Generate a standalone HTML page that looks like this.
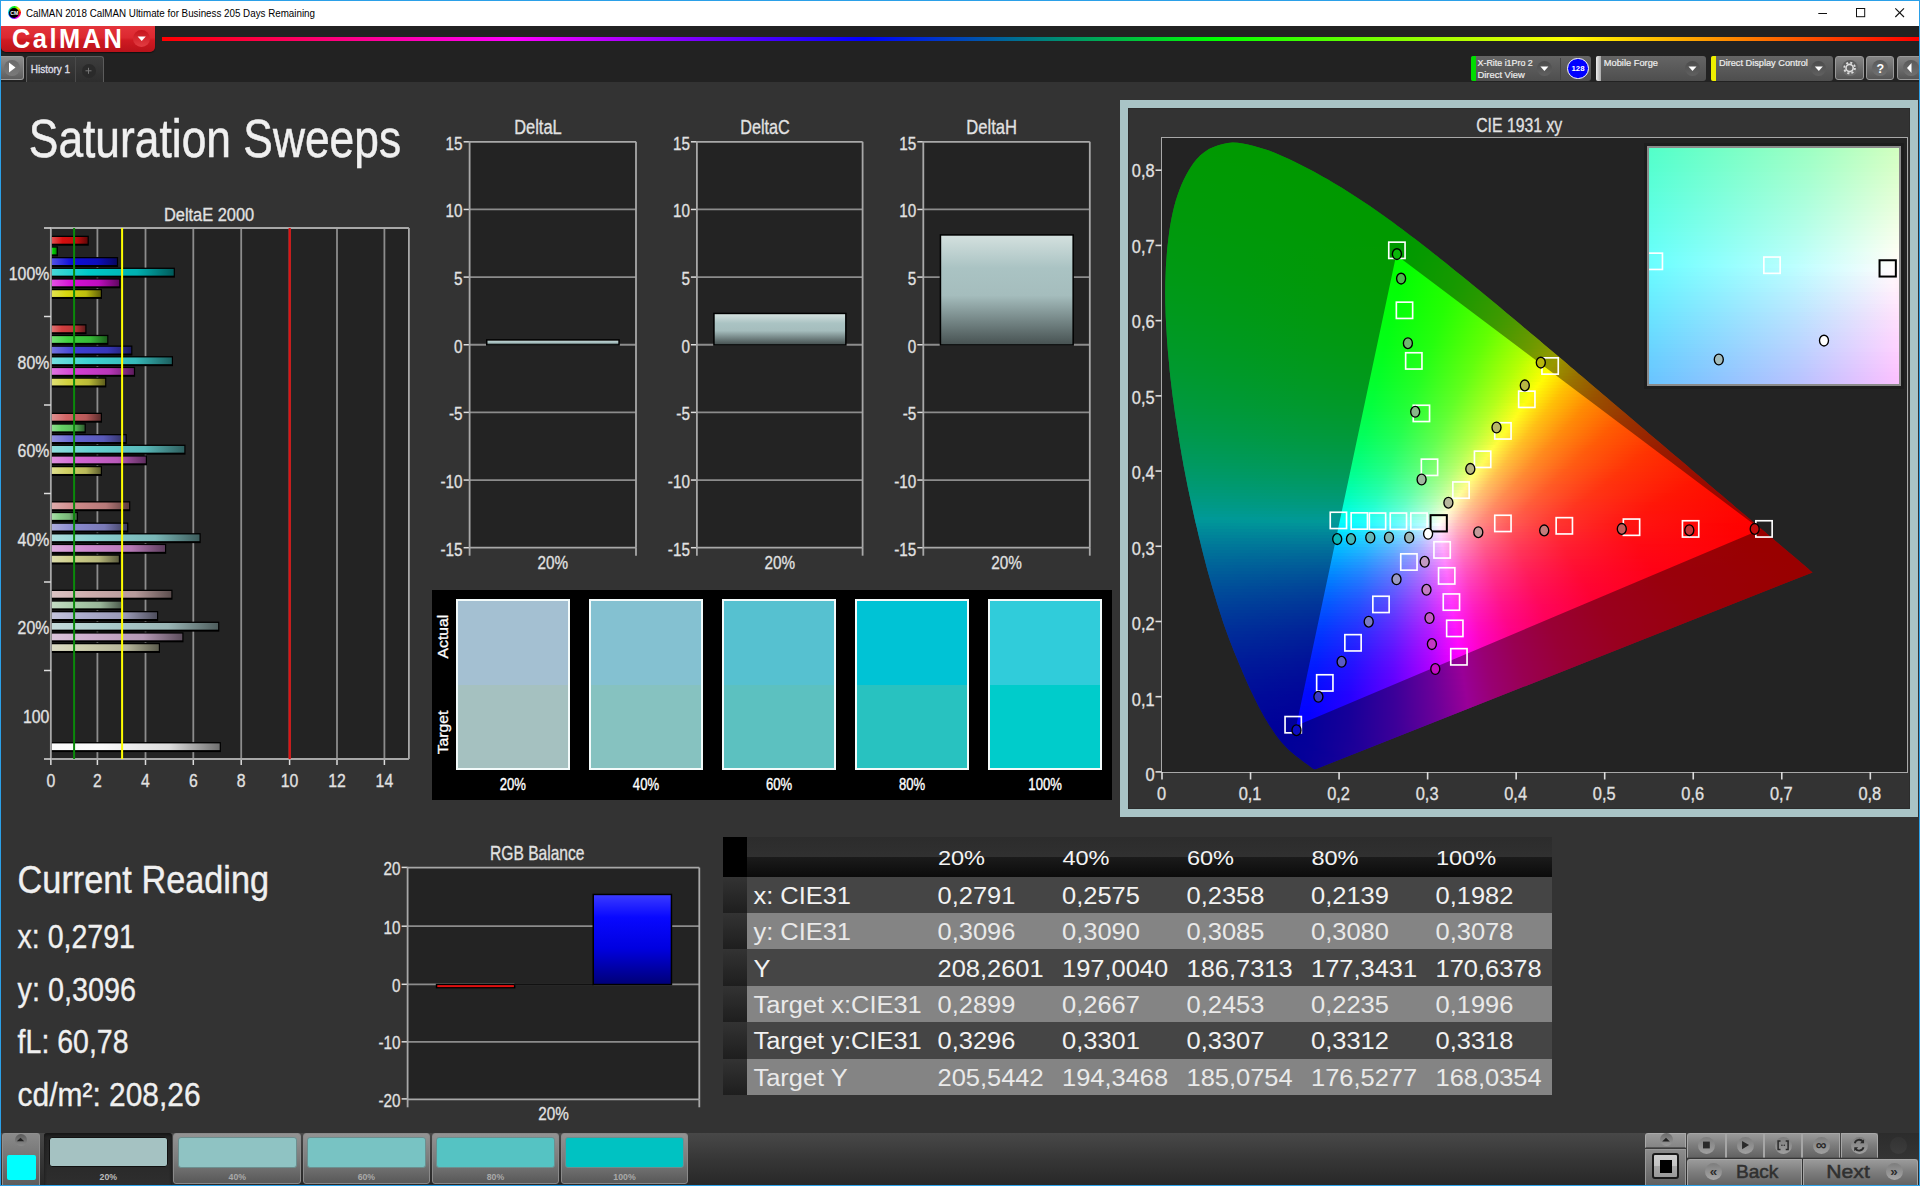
<!DOCTYPE html>
<html><head><meta charset="utf-8"><title>CalMAN</title><style>html,body{margin:0;padding:0;background:#333}
body{width:1920px;height:1186px;position:relative;overflow:hidden;font-family:"Liberation Sans",sans-serif}
.a{position:absolute;box-sizing:border-box}
.cie{position:absolute;overflow:hidden}
.cie i{position:absolute;left:0;right:0;display:block}
svg{position:absolute;left:0;top:0}
svg text{font-family:"Liberation Sans",sans-serif}
</style></head><body>
<div class="a" style="left:0px;top:0px;width:1920px;height:1186px;background:#2ba0e8"></div>
<div class="a" style="left:1px;top:1px;width:1918px;height:1184px;background:#333"></div>
<div class="a" style="left:1px;top:1px;width:1918px;height:25px;background:#fff"></div>
<div class="a" style="left:1px;top:26px;width:1918px;height:56px;background:#222"></div>
<div class="a" style="left:7.6px;top:6.1px;width:13.2px;height:13.2px;border-radius:50%;background:conic-gradient(from 0deg,#0e0 0,#ee0 12%,#f00 25%,#f0f 42%,#00f 60%,#0dd 78%,#0e0 100%)"></div>
<div class="a" style="left:9px;top:7.5px;width:10.4px;height:10.4px;border-radius:50%;background:#000"></div>
<div class="a" style="left:1.3px;top:26px;width:154.2px;height:25.5px;border-radius:0 0 5px 5px;background:linear-gradient(180deg,#e4343b 0,#dc2830 45%,#cf1a22 55%,#b9121a 100%);box-shadow:0 1px 1px #111"></div>
<div class="a" style="left:133.2px;top:29.7px;width:17px;height:17px;border-radius:50%;background:linear-gradient(180deg,#c6141c,#e33c42)"></div>
<div class="a" style="left:162px;top:36.5px;width:1757px;height:4.5px;background:linear-gradient(90deg,#f00 0,#f0f 20%,#00f 40%,#0f0 60%,#ff0 80%,#f00 100%)"></div>
<div class="a" style="left:1px;top:56px;width:22.5px;height:23.5px;border-radius:0 3px 3px 0;background:linear-gradient(180deg,#8e8e8e,#5e5e5e);border:1px solid #9a9a9a;border-left:none"></div>
<div class="a" style="left:4px;top:59.5px;width:16px;height:16px;border-radius:50%;background:linear-gradient(180deg,#6a6a6a,#7a7a7a)"></div>
<div class="a" style="left:26px;top:56px;width:49.5px;height:26px;border-radius:3px 0 0 0;background:linear-gradient(180deg,#3d3d3d,#2d2d2d);border:1px solid #5c5c5c;border-bottom:none"></div>
<div class="a" style="left:75px;top:56px;width:28.5px;height:26px;border-radius:0 3px 0 0;background:linear-gradient(180deg,#3d3d3d,#2d2d2d);border:1px solid #5c5c5c;border-bottom:none;border-left:1px solid #4a4a4a"></div>
<div class="a" style="left:81.5px;top:63.5px;width:14px;height:14px;border-radius:50%;background:#2a2a2a"></div>
<div class="a" style="left:1471px;top:56px;width:120px;height:25px;border-radius:3px;background:linear-gradient(180deg,#656565,#4e4e4e)"></div>
<div class="a" style="left:1471px;top:56px;width:4.5px;height:25px;border-radius:2px 0 0 2px;background:#0d0"></div>
<div class="a" style="left:1536.9px;top:61px;width:15px;height:15px;border-radius:50%;background:linear-gradient(180deg,#4c4c4c,#606060)"></div>
<div class="a" style="left:1567.2px;top:57.8px;width:21.6px;height:21.6px;border-radius:50%;background:#00f;border:1px solid #fff"></div>
<div class="a" style="left:1596px;top:56px;width:110px;height:25px;border-radius:3px;background:linear-gradient(180deg,#656565,#4e4e4e)"></div>
<div class="a" style="left:1596px;top:56px;width:4.5px;height:25px;border-radius:2px 0 0 2px;background:linear-gradient(90deg,#eee,#aaa)"></div>
<div class="a" style="left:1685px;top:61px;width:15px;height:15px;border-radius:50%;background:linear-gradient(180deg,#4c4c4c,#606060)"></div>
<div class="a" style="left:1711.3px;top:56px;width:121.5px;height:25px;border-radius:3px;background:linear-gradient(180deg,#656565,#4e4e4e)"></div>
<div class="a" style="left:1711.3px;top:56px;width:4.5px;height:25px;border-radius:2px 0 0 2px;background:#ee0"></div>
<div class="a" style="left:1811.3px;top:61px;width:15px;height:15px;border-radius:50%;background:linear-gradient(180deg,#4c4c4c,#606060)"></div>
<div class="a" style="left:1835.4px;top:56px;width:28.4px;height:24px;border-radius:3px;background:linear-gradient(180deg,#858585,#555);border:1px solid #9a9a9a"></div>
<div class="a" style="left:1841.6px;top:60px;width:16px;height:16px;border-radius:50%;background:linear-gradient(180deg,#5a5a5a,#707070)"></div>
<div class="a" style="left:1866px;top:56px;width:28.4px;height:24px;border-radius:3px;background:linear-gradient(180deg,#858585,#555);border:1px solid #9a9a9a"></div>
<div class="a" style="left:1872.2px;top:60px;width:16px;height:16px;border-radius:50%;background:linear-gradient(180deg,#5a5a5a,#707070)"></div>
<div class="a" style="left:1896.6px;top:56px;width:28.4px;height:24px;border-radius:3px;background:linear-gradient(180deg,#858585,#555);border:1px solid #9a9a9a"></div>
<div class="a" style="left:1902.8px;top:60px;width:16px;height:16px;border-radius:50%;background:linear-gradient(180deg,#5a5a5a,#707070)"></div>
<div class="a" style="left:432px;top:590px;width:680px;height:209.5px;background:#000"></div>
<div class="a" style="left:455.7px;top:599px;width:114.5px;height:170.6px;background:linear-gradient(180deg,#a4c0d2 0,#a4c0d2 50.2%,#a5c1c0 50.2%,#a5c1c0 100%);border:2px solid #f2fafa"></div>
<div class="a" style="left:588.75px;top:599px;width:114.5px;height:170.6px;background:linear-gradient(180deg,#84c1d1 0,#84c1d1 50.2%,#86c2c0 50.2%,#86c2c0 100%);border:2px solid #f2fafa"></div>
<div class="a" style="left:721.8px;top:599px;width:114.5px;height:170.6px;background:linear-gradient(180deg,#56c1d0 0,#56c1d0 50.2%,#5cc1c0 50.2%,#5cc1c0 100%);border:2px solid #f2fafa"></div>
<div class="a" style="left:854.85px;top:599px;width:114.5px;height:170.6px;background:linear-gradient(180deg,#00c3d5 0,#00c3d5 50.2%,#28c2c0 50.2%,#28c2c0 100%);border:2px solid #f2fafa"></div>
<div class="a" style="left:987.9px;top:599px;width:114.5px;height:170.6px;background:linear-gradient(180deg,#30ccda 0,#30ccda 50.2%,#00cccb 50.2%,#00cccb 100%);border:2px solid #f2fafa"></div>
<div class="a" style="left:1120px;top:100px;width:798.4px;height:717.2px;border:8px solid #a9c4c6;background:#333;box-shadow:inset 0 0 0 1px #2c2c2c"></div>
<div class="a" style="left:1161.3px;top:137.2px;width:746.5px;height:635.5px;background:#232323;border:1.8px solid #a8a8a8"></div>
<div class="cie" style="left:1163px;top:139px;width:744px;height:633px;clip-path:polygon(153.1px 630px,153.1px 630px,152.9px 630.1px,152.7px 630.1px,152.4px 630.2px,152.2px 630.2px,151.8px 630.2px,151.4px 630.2px,150.8px 629.9px,149.8px 629.4px,148.5px 628.6px,146.8px 627.3px,144.6px 625.6px,141.6px 623.4px,137.7px 620.4px,132.7px 616.7px,126.5px 611.4px,123px 608px,119px 603.7px,115.9px 599.9px,112.5px 595.5px,108.9px 590.1px,106.5px 586.5px,104.1px 582.6px,101.5px 578.3px,98.9px 573.6px,96px 568.2px,93.9px 564.1px,91.8px 559.7px,89.5px 555.1px,87.2px 550.3px,84.8px 545.1px,82.4px 539.5px,79.8px 533.6px,78.2px 529.6px,76.4px 525.5px,74.7px 521.3px,72.9px 516.9px,71px 512.5px,69.2px 507.8px,67.3px 503px,65.4px 498.1px,63.6px 493px,61.7px 487.7px,59.8px 482.2px,58.4px 477.8px,56.9px 473.2px,55.4px 468.6px,53.9px 463.8px,52.5px 458.9px,51px 454px,49.5px 448.9px,48px 443.8px,46.5px 438.5px,45px 433.2px,43.5px 427.7px,42.1px 422.2px,40.6px 416.6px,39.2px 411px,38.1px 406.5px,37px 401.9px,35.8px 397.2px,34.7px 392.5px,33.6px 387.7px,32.4px 382.9px,31.3px 377.9px,30.2px 373px,29.1px 368px,28px 362.9px,26.9px 357.9px,25.8px 352.8px,24.7px 347.7px,23.7px 342.5px,22.7px 337.4px,21.7px 332.3px,20.7px 327.2px,19.8px 322px,18.9px 317.2px,18.1px 312.3px,17.2px 307.3px,16.4px 302.3px,15.6px 297.3px,14.8px 292.3px,14px 287.2px,13.2px 282.1px,12.4px 277px,11.7px 272px,11px 266.9px,10.3px 261.8px,9.6px 256.8px,9px 251.7px,8.4px 246.7px,7.8px 241.8px,7.2px 236.8px,6.7px 231.9px,6.3px 227.1px,5.8px 221.7px,5.3px 216.3px,4.8px 211px,4.4px 205.6px,4px 200.2px,3.7px 194.9px,3.4px 189.6px,3.1px 184.3px,2.8px 179.1px,2.6px 173.9px,2.5px 168.7px,2.3px 163.6px,2.3px 158.6px,2.2px 153.6px,2.3px 148.7px,2.3px 143.9px,2.5px 139.2px,2.7px 133.5px,2.9px 127.8px,3.3px 122.2px,3.7px 116.7px,4.1px 111.2px,4.7px 105.8px,5.3px 100.6px,5.9px 95.4px,6.6px 90.3px,7.4px 85.4px,8.3px 80.6px,9.2px 75.9px,10.2px 71.4px,11.3px 67.1px,12.9px 61.3px,14.7px 55.7px,16.7px 50.3px,18.8px 45.1px,21px 40.3px,23.3px 35.7px,25.7px 31.4px,28.2px 27.4px,30.8px 23.7px,33.4px 20.4px,37.4px 16.3px,41.6px 12.9px,46px 10.1px,50.6px 7.9px,55.3px 6.2px,60px 4.9px,64.8px 3.9px,69.6px 3.5px,74.6px 3.7px,79.6px 4.4px,84.7px 5.4px,89.9px 6.7px,95px 8.2px,100.1px 9.7px,105.2px 11.3px,110.4px 13.3px,115.6px 15.4px,120.7px 17.7px,125.9px 20.1px,131px 22.6px,136px 25px,140.9px 27.5px,145.8px 30px,150.7px 32.6px,155.5px 35.2px,160.3px 37.9px,165px 40.6px,169.8px 43.4px,174.5px 46.2px,179.2px 49px,183.8px 52px,188.5px 54.9px,193.1px 57.9px,197.7px 60.9px,202.3px 64px,206.9px 67.1px,211.5px 70.3px,216.1px 73.5px,220.7px 76.7px,225.2px 80px,229.8px 83.3px,234.3px 86.7px,238.9px 90px,243.4px 93.4px,248px 96.9px,252.5px 100.3px,257px 103.8px,261.5px 107.3px,266px 110.8px,270px 113.9px,273.9px 117.1px,277.9px 120.2px,281.8px 123.3px,285.8px 126.5px,289.7px 129.7px,293.7px 132.9px,297.6px 136.1px,301.6px 139.3px,305.6px 142.5px,309.5px 145.7px,313.5px 149px,317.5px 152.2px,321.4px 155.5px,325.4px 158.8px,329.3px 162.1px,333.3px 165.3px,337.2px 168.6px,341.2px 171.9px,345.1px 175.2px,349.1px 178.5px,353px 181.8px,356.9px 185.1px,360.9px 188.4px,364.8px 191.7px,368.7px 195px,372.7px 198.3px,376.6px 201.6px,380.5px 204.9px,384.4px 208.2px,388.3px 211.5px,392.2px 214.8px,396.1px 218.1px,400px 221.3px,403.8px 224.6px,407.7px 227.9px,411.5px 231.1px,415.3px 234.4px,419.1px 237.6px,422.9px 240.8px,427.2px 244.5px,431.6px 248.2px,435.8px 251.8px,440.1px 255.5px,444.4px 259.1px,448.6px 262.7px,452.8px 266.2px,456.9px 269.8px,461.1px 273.3px,465.2px 276.8px,469.3px 280.3px,473.4px 283.7px,477.4px 287.2px,481.4px 290.5px,485.3px 293.9px,489.2px 297.2px,493.1px 300.5px,497px 303.8px,500.8px 307px,504.6px 310.2px,508.3px 313.4px,512.5px 317px,516.8px 320.6px,520.9px 324.1px,525px 327.6px,528.9px 331px,532.8px 334.3px,537.3px 338.1px,541.7px 341.8px,545.9px 345.5px,550.1px 349px,554.1px 352.4px,559.1px 356.6px,563.9px 360.7px,568.5px 364.6px,572.9px 368.4px,577.1px 371.9px,581.1px 375.2px,584.9px 378.4px,588.5px 381.5px,593px 385.4px,597.2px 388.9px,601.2px 392.3px,606.5px 396.9px,611.3px 400.9px,615.5px 404.5px,619.3px 407.7px,625.8px 413.2px,631.2px 417.8px,635.6px 421.6px,639.1px 424.6px,641.8px 426.8px,643.8px 428.6px,645.3px 429.8px,646.3px 430.7px,647.1px 431.4px,647.7px 431.9px,648.4px 432.4px,648.9px 432.9px,649.2px 433.2px,649.4px 433.3px,649.5px 433.4px)"><i style="top:3px;height:3px;background:linear-gradient(90deg,#00ff02 53px,#0f0 90px)"></i><i style="top:6px;height:3px;background:linear-gradient(90deg,#00ff03 46px,#0f0 100px)"></i><i style="top:9px;height:3px;background:linear-gradient(90deg,#00ff04 40px,#0f0 109px)"></i><i style="top:12px;height:3px;background:linear-gradient(90deg,#00ff04 36px,#0f0 117px)"></i><i style="top:15px;height:3px;background:linear-gradient(90deg,#00ff05 33px,#0f0 124px)"></i><i style="top:18px;height:3px;background:linear-gradient(90deg,#00ff06 30px,#0f0 130px)"></i><i style="top:21px;height:3px;background:linear-gradient(90deg,#00ff06 28px,#0f0 136px)"></i><i style="top:24px;height:3px;background:linear-gradient(90deg,#00ff07 26px,#0f0 142px)"></i><i style="top:27px;height:3px;background:linear-gradient(90deg,#00ff08 24px,#0f0 148px)"></i><i style="top:30px;height:3px;background:linear-gradient(90deg,#00ff08 22px,#0f0 154px)"></i><i style="top:33px;height:3px;background:linear-gradient(90deg,#00ff09 21px,#0f0 159px)"></i><i style="top:36px;height:3px;background:linear-gradient(90deg,#00ff0a 19px,#0f0 165px)"></i><i style="top:39px;height:3px;background:linear-gradient(90deg,#00ff0a 18px,#0f0 170px)"></i><i style="top:42px;height:3px;background:linear-gradient(90deg,#00ff0b 16px,#0f0 175px)"></i><i style="top:45px;height:3px;background:linear-gradient(90deg,#00ff0c 15px,#0f0 180px)"></i><i style="top:48px;height:3px;background:linear-gradient(90deg,#00ff0c 14px,#0f0 185px)"></i><i style="top:51px;height:3px;background:linear-gradient(90deg,#00ff0d 13px,#0f0 190px)"></i><i style="top:54px;height:3px;background:linear-gradient(90deg,#00ff0e 12px,#0f0 192px,#0f0 194px)"></i><i style="top:57px;height:3px;background:linear-gradient(90deg,#00ff0e 11px,#0f0 194px,#0f0 199px)"></i><i style="top:60px;height:3px;background:linear-gradient(90deg,#00ff0f 10px,#0f0 196px,#0f0 203px)"></i><i style="top:63px;height:3px;background:linear-gradient(90deg,#00ff10 9px,#0f0 199px,#0f0 208px)"></i><i style="top:66px;height:3px;background:linear-gradient(90deg,#00ff10 8px,#0f0 201px,#0f0 212px)"></i><i style="top:69px;height:3px;background:linear-gradient(90deg,#0f1 8px,#0f0 204px,#0f0 216px)"></i><i style="top:72px;height:3px;background:linear-gradient(90deg,#00ff12 7px,#0f0 207px,#0f0 221px)"></i><i style="top:75px;height:3px;background:linear-gradient(90deg,#00ff13 6px,#0f0 209px,#0f0 225px)"></i><i style="top:78px;height:3px;background:linear-gradient(90deg,#00ff13 6px,#0f0 212px,#0f0 229px)"></i><i style="top:81px;height:3px;background:linear-gradient(90deg,#00ff14 5px,#0f0 215px,#0f0 233px)"></i><i style="top:84px;height:3px;background:linear-gradient(90deg,#00ff15 5px,#0f0 218px,#0f0 237px)"></i><i style="top:87px;height:3px;background:linear-gradient(90deg,#00ff16 4px,#0f0 221px,#0f0 241px)"></i><i style="top:90px;height:3px;background:linear-gradient(90deg,#00ff17 4px,#0f0 224px,#01ff00 245px)"></i><i style="top:93px;height:3px;background:linear-gradient(90deg,#00ff17 3px,#0f0 227px,#03ff00 249px)"></i><i style="top:96px;height:3px;background:linear-gradient(90deg,#00ff18 3px,#0f0 231px,#05ff00 253px)"></i><i style="top:99px;height:3px;background:linear-gradient(90deg,#00ff19 3px,#0f0 234px,#07ff00 257px)"></i><i style="top:102px;height:3px;background:linear-gradient(90deg,#00ff1a 2px,#0f0 237px,#09ff00 261px)"></i><i style="top:105px;height:3px;background:linear-gradient(90deg,#00ff1b 2px,#01ff00 240px,#0bff00 265px)"></i><i style="top:108px;height:3px;background:linear-gradient(90deg,#00ff1c 2px,#02ff00 244px,#0eff00 269px)"></i><i style="top:111px;height:3px;background:linear-gradient(90deg,#00ff1d 1px,#03ff00 245px,#1f0 273px)"></i><i style="top:114px;height:3px;background:linear-gradient(90deg,#00ff1e 1px,#03ff00 244px,#13ff00 276px)"></i><i style="top:117px;height:3px;background:linear-gradient(90deg,#00ff1e 1px,#03ff00 243px,#17ff00 280px)"></i><i style="top:120px;height:3px;background:linear-gradient(90deg,#00ff1f 1px,#03ff00 243px,#1aff00 284px)"></i><i style="top:123px;height:3px;background:linear-gradient(90deg,#00ff20 1px,#03ff00 242px,#1eff00 288px)"></i><i style="top:126px;height:3px;background:linear-gradient(90deg,#00ff21 0px,#03ff01 241px,#21ff00 291px)"></i><i style="top:129px;height:3px;background:linear-gradient(90deg,#0f2 0px,#03ff01 241px,#25ff00 295px)"></i><i style="top:132px;height:3px;background:linear-gradient(90deg,#00ff23 0px,#03ff02 240px,#26ff00 295px,#29ff00 299px)"></i><i style="top:135px;height:3px;background:linear-gradient(90deg,#00ff24 0px,#03ff02 239px,#26ff00 294px,#2dff00 303px)"></i><i style="top:138px;height:3px;background:linear-gradient(90deg,#00ff25 0px,#03ff03 238px,#26ff00 293px,#31ff00 306px)"></i><i style="top:141px;height:3px;background:linear-gradient(90deg,#00ff26 0px,#03ff03 238px,#26ff00 292px,#36ff00 310px)"></i><i style="top:144px;height:3px;background:linear-gradient(90deg,#00ff27 0px,#03ff04 237px,#26ff00 291px,#3bff00 314px)"></i><i style="top:147px;height:3px;background:linear-gradient(90deg,#00ff29 0px,#03ff05 236px,#25ff00 289px,#3fff00 317px)"></i><i style="top:150px;height:3px;background:linear-gradient(90deg,#00ff2a 0px,#03ff05 235px,#25ff00 288px,#45ff00 321px)"></i><i style="top:153px;height:3px;background:linear-gradient(90deg,#00ff2b 0px,#03ff06 235px,#26ff00 288px,#4bff00 325px)"></i><i style="top:156px;height:3px;background:linear-gradient(90deg,#00ff2c 0px,#03ff07 234px,#25ff00 286px,#50ff00 328px)"></i><i style="top:159px;height:3px;background:linear-gradient(90deg,#00ff2d 0px,#03ff08 233px,#25ff01 285px,#56ff00 332px)"></i><i style="top:162px;height:3px;background:linear-gradient(90deg,#00ff2e 0px,#03ff08 233px,#26ff01 285px,#5cff00 335px)"></i><i style="top:165px;height:3px;background:linear-gradient(90deg,#00ff30 0px,#03ff09 232px,#25ff02 283px,#63ff00 339px)"></i><i style="top:168px;height:3px;background:linear-gradient(90deg,#00ff31 0px,#03ff0a 231px,#25ff03 282px,#63ff00 338px,#6aff00 343px)"></i><i style="top:171px;height:3px;background:linear-gradient(90deg,#00ff32 0px,#03ff0b 230px,#25ff03 280px,#61ff00 335px,#70ff00 346px)"></i><i style="top:174px;height:3px;background:linear-gradient(90deg,#0f3 0px,#03ff0c 230px,#26ff04 280px,#63ff00 335px,#78ff00 350px)"></i><i style="top:177px;height:3px;background:linear-gradient(90deg,#00ff35 0px,#03ff0d 229px,#26ff05 279px,#64ff00 334px,#7fff00 353px)"></i><i style="top:180px;height:3px;background:linear-gradient(90deg,#00ff36 0px,#03ff0e 228px,#25ff06 277px,#62ff00 331px,#8f0 357px)"></i><i style="top:183px;height:3px;background:linear-gradient(90deg,#00ff37 1px,#03ff0f 228px,#26ff07 277px,#64ff00 331px,#8fff00 360px)"></i><i style="top:186px;height:3px;background:linear-gradient(90deg,#00ff39 1px,#03ff10 227px,#26ff08 276px,#63ff00 329px,#9f0 364px)"></i><i style="top:189px;height:3px;background:linear-gradient(90deg,#00ff3a 1px,#03ff12 226px,#25ff09 274px,#63ff01 327px,#a3ff00 368px)"></i><i style="top:192px;height:3px;background:linear-gradient(90deg,#00ff3c 1px,#03ff13 225px,#25ff0a 273px,#63ff01 326px,#abff00 371px)"></i><i style="top:195px;height:3px;background:linear-gradient(90deg,#00ff3d 1px,#03ff14 225px,#26ff0b 273px,#64ff02 325px,#b4ff00 374px,#b6ff00 375px)"></i><i style="top:198px;height:3px;background:linear-gradient(90deg,#00ff3f 1px,#03ff15 224px,#25ff0c 271px,#63ff03 323px,#b4ff00 372px,#c0ff00 378px)"></i><i style="top:201px;height:3px;background:linear-gradient(90deg,#00ff40 2px,#03ff17 223px,#25ff0d 270px,#62ff04 321px,#b4ff00 370px,#cf0 382px)"></i><i style="top:204px;height:3px;background:linear-gradient(90deg,#00ff42 2px,#03ff18 223px,#26ff0e 270px,#64ff05 321px,#b6ff00 369px,#d6ff00 385px)"></i><i style="top:207px;height:3px;background:linear-gradient(90deg,#00ff43 2px,#03ff1a 222px,#25ff10 268px,#64ff06 319px,#b5ff00 367px,#e3ff00 389px)"></i><i style="top:210px;height:3px;background:linear-gradient(90deg,#00ff45 2px,#03ff1b 221px,#26ff11 267px,#63ff07 317px,#b3ff00 364px,#f1ff00 393px)"></i><i style="top:213px;height:3px;background:linear-gradient(90deg,#00ff46 3px,#03ff1d 220px,#25ff13 265px,#62ff08 315px,#b3ff00 362px,#fdff00 396px)"></i><i style="top:216px;height:3px;background:linear-gradient(90deg,#00ff48 3px,#03ff1e 220px,#26ff14 265px,#63ff0a 314px,#b4ff01 361px,#fffc00 396px,#fff300 400px)"></i><i style="top:219px;height:3px;background:linear-gradient(90deg,#00ff4a 3px,#03ff20 219px,#26ff16 264px,#64ff0b 313px,#b4ff02 359px,#fffe00 393px,#ffe700 403px)"></i><i style="top:222px;height:3px;background:linear-gradient(90deg,#00ff4c 3px,#03ff21 218px,#25ff17 262px,#63ff0c 311px,#b4ff03 357px,#fffe00 391px,#ffdb00 407px)"></i><i style="top:225px;height:3px;background:linear-gradient(90deg,#00ff4d 4px,#03ff23 218px,#26ff19 262px,#64ff0e 310px,#b4ff04 355px,#fffe00 389px,#ffd000 410px)"></i><i style="top:228px;height:3px;background:linear-gradient(90deg,#00ff4f 4px,#03ff25 217px,#26ff1b 261px,#64ff0f 309px,#b5ff05 354px,#fffd00 387px,#ffc500 414px)"></i><i style="top:231px;height:3px;background:linear-gradient(90deg,#00ff51 4px,#03ff27 216px,#25ff1d 259px,#62ff11 306px,#b3ff07 351px,#fffd01 385px,#ffbf00 415px,#ffbc00 417px)"></i><i style="top:234px;height:3px;background:linear-gradient(90deg,#00ff53 4px,#03ff29 215px,#25ff1e 258px,#63ff13 305px,#b3ff08 349px,#fffd01 383px,#ffc000 412px,#ffb100 421px)"></i><i style="top:237px;height:3px;background:linear-gradient(90deg,#0f5 5px,#03ff2a 215px,#26ff20 258px,#65ff14 305px,#b6ff0a 349px,#fffc03 381px,#ffbf00 410px,#ffa900 424px)"></i><i style="top:240px;height:3px;background:linear-gradient(90deg,#00ff57 5px,#03ff2c 214px,#25ff22 256px,#63ff17 302px,#b4ff0b 346px,#fffc04 379px,#ffbf00 408px,#ffa000 428px)"></i><i style="top:243px;height:3px;background:linear-gradient(90deg,#00ff59 5px,#03ff2e 213px,#25ff24 255px,#63ff18 301px,#b4ff0d 344px,#fffe05 376px,#ffc200 404px,#ff9800 431px)"></i><i style="top:246px;height:3px;background:linear-gradient(90deg,#00ff5b 6px,#03ff30 213px,#25ff26 254px,#62ff1a 299px,#b3ff0f 342px,#fffe07 374px,#ffc101 402px,#ff9000 435px)"></i><i style="top:249px;height:3px;background:linear-gradient(90deg,#00ff5d 6px,#03ff32 212px,#26ff28 253px,#63ff1c 298px,#b3ff11 340px,#fffd09 372px,#ffc002 400px,#ff8a00 437px,#f80 439px)"></i><i style="top:252px;height:3px;background:linear-gradient(90deg,#00ff5f 7px,#03ff35 211px,#26ff2a 252px,#64ff1e 297px,#b5ff13 339px,#fffd0a 370px,#ffc003 398px,#ff8900 435px,#ff8100 442px)"></i><i style="top:255px;height:3px;background:linear-gradient(90deg,#00ff61 7px,#03ff37 210px,#25ff2d 250px,#61ff21 294px,#b2ff15 336px,#fffd0c 368px,#ffbf04 396px,#ff8900 433px,#ff7a00 446px)"></i><i style="top:258px;height:3px;background:linear-gradient(90deg,#00ff63 7px,#03ff39 210px,#26ff2f 250px,#64ff23 294px,#b4ff17 335px,#fffc0e 366px,#ffc005 393px,#ff8a00 429px,#ff7400 449px)"></i><i style="top:261px;height:3px;background:linear-gradient(90deg,#0f6 8px,#03ff3c 209px,#25ff32 248px,#61ff26 291px,#b2ff1a 332px,#fffc10 364px,#ffbf07 391px,#ff8900 427px,#ff6e00 453px)"></i><i style="top:264px;height:3px;background:linear-gradient(90deg,#00ff68 8px,#03ff3e 208px,#25ff34 247px,#62ff28 290px,#b4ff1c 331px,#fffe13 361px,#ffc008 388px,#ff8b01 423px,#ff6900 456px)"></i><i style="top:267px;height:3px;background:linear-gradient(90deg,#00ff6a 8px,#03ff41 208px,#26ff36 247px,#65ff2a 290px,#b6ff1e 330px,#fffe15 359px,#ffc20a 385px,#ff8b02 420px,#ff6300 460px)"></i><i style="top:270px;height:3px;background:linear-gradient(90deg,#00ff6d 9px,#03ff43 207px,#25ff39 245px,#62ff2d 287px,#b3ff21 327px,#fffe18 357px,#ffc10c 383px,#ff8a03 418px,#ff5e00 463px)"></i><i style="top:273px;height:3px;background:linear-gradient(90deg,#00ff6f 9px,#03ff46 206px,#25ff3c 244px,#63ff30 286px,#b3ff24 325px,#fffd1a 355px,#ffc00e 381px,#ff8904 416px,#ff5b00 464px,#ff5800 467px)"></i><i style="top:276px;height:3px;background:linear-gradient(90deg,#00ff72 10px,#03ff49 205px,#24ff3f 242px,#60ff33 283px,#b0ff27 322px,#fffd1d 353px,#ffbf10 379px,#ff8a05 413px,#ff5b00 460px,#ff5400 470px)"></i><i style="top:279px;height:3px;background:linear-gradient(90deg,#00ff74 10px,#03ff4c 205px,#25ff42 242px,#63ff36 283px,#b4ff2a 322px,#fffd20 351px,#ffbf11 377px,#ff8906 411px,#ff5a00 458px,#ff4f00 474px)"></i><i style="top:282px;height:3px;background:linear-gradient(90deg,#0f7 11px,#03ff4f 204px,#25ff45 241px,#64ff39 282px,#b4ff2d 320px,#fffc23 349px,#ffc014 374px,#ff8908 408px,#ff5a00 455px,#ff4b00 477px)"></i><i style="top:285px;height:3px;background:linear-gradient(90deg,#00ff7a 11px,#03ff52 203px,#24ff48 239px,#61ff3d 279px,#b1ff30 317px,#ffff27 346px,#ffc117 371px,#ff8b0a 404px,#ff5c01 450px,#ff4600 481px)"></i><i style="top:288px;height:3px;background:linear-gradient(90deg,#00ff7c 12px,#03ff55 203px,#25ff4b 239px,#64ff3f 279px,#b3ff34 316px,#fffe2a 344px,#ffc019 369px,#ff8a0b 402px,#ff5b02 447px,#ff4300 484px)"></i><i style="top:291px;height:3px;background:linear-gradient(90deg,#00ff7f 12px,#03ff58 202px,#26ff4e 238px,#63ff43 277px,#b3ff37 314px,#fffe2d 342px,#ffc21c 366px,#ff8c0d 398px,#ff5d03 442px,#ff3f00 488px)"></i><i style="top:294px;height:3px;background:linear-gradient(90deg,#00ff82 13px,#03ff5b 201px,#24ff52 236px,#62ff47 275px,#b2ff3b 312px,#fffd31 340px,#ffc11e 364px,#ff8b0f 396px,#ff5c04 440px,#ff3b00 491px)"></i><i style="top:297px;height:3px;background:linear-gradient(90deg,#00ff85 13px,#03ff5f 200px,#24ff55 235px,#62ff4a 274px,#b2ff3e 310px,#fffd34 338px,#ffc021 362px,#ff8a11 394px,#ff5b05 438px,#ff3700 495px)"></i><i style="top:300px;height:3px;background:linear-gradient(90deg,#0f8 14px,#03ff62 200px,#26ff59 235px,#63ff4e 273px,#b4ff42 309px,#fffd38 336px,#ffbf24 360px,#ff8913 392px,#ff5a06 436px,#ff3400 499px)"></i><i style="top:303px;height:3px;background:linear-gradient(90deg,#00ff8c 14px,#03ff66 199px,#25ff5d 233px,#62ff52 271px,#b4ff46 307px,#fffc3c 334px,#ffbe26 358px,#ff8915 389px,#ff5b07 432px,#ff3400 495px,#ff3100 502px)"></i><i style="top:306px;height:3px;background:linear-gradient(90deg,#00ff8f 15px,#03ff6a 198px,#25ff61 232px,#61ff56 269px,#b1ff4b 304px,#ffff41 331px,#ffc22b 354px,#ff8b18 385px,#ff5c09 427px,#ff3500 488px,#ff2d00 506px)"></i><i style="top:309px;height:3px;background:linear-gradient(90deg,#00ff92 15px,#03ff6d 198px,#26ff64 232px,#64ff5a 269px,#b6ff4e 304px,#ffff45 329px,#ffc12e 352px,#ff8b1a 382px,#ff5c0b 424px,#ff3500 485px,#ff2b00 509px)"></i><i style="top:312px;height:3px;background:linear-gradient(90deg,#00ff95 16px,#03ff71 197px,#25ff69 230px,#61ff5e 266px,#b3ff53 301px,#fffe4a 327px,#ffc031 350px,#ff8a1d 380px,#ff5b0c 422px,#ff3401 483px,#ff2800 513px)"></i><i style="top:315px;height:3px;background:linear-gradient(90deg,#0f9 16px,#03ff76 196px,#25ff6d 229px,#62ff63 265px,#b2ff58 299px,#fffe4e 325px,#ffc235 347px,#ff8b1f 377px,#ff5c0e 418px,#ff3502 477px,#ff2500 516px)"></i><i style="top:318px;height:3px;background:linear-gradient(90deg,#00ff9c 17px,#03ff7a 195px,#24ff72 227px,#61ff67 263px,#b2ff5d 297px,#fffd53 323px,#ffc139 345px,#ff8b22 374px,#ff5d10 414px,#ff3603 472px,#f20 520px)"></i><i style="top:321px;height:3px;background:linear-gradient(90deg,#00ffa0 17px,#03ff7e 195px,#25ff76 227px,#62ff6c 262px,#b1ff61 295px,#fffd58 321px,#ffc03c 343px,#ff8a25 372px,#ff5c12 412px,#ff3504 470px,#ff2000 523px)"></i><i style="top:324px;height:3px;background:linear-gradient(90deg,#00ffa4 18px,#03ff83 194px,#25ff7b 226px,#63ff71 261px,#b4ff66 294px,#fffc5d 319px,#ffbf40 341px,#ff8927 370px,#ff5b13 410px,#ff3405 468px,#ff1e00 527px)"></i><i style="top:327px;height:3px;background:linear-gradient(90deg,#00ffa8 18px,#03ff87 193px,#24ff80 224px,#60ff76 258px,#b0ff6c 291px,#fffc62 317px,#ffbe44 339px,#ff882a 368px,#ff5a15 408px,#ff3306 466px,#ff1b00 530px)"></i><i style="top:330px;height:3px;background:linear-gradient(90deg,#00ffac 19px,#03ff8c 193px,#26ff84 224px,#63ff7b 258px,#b3ff71 290px,#ffff69 314px,#ffc24a 335px,#ff8c2f 363px,#ff5d19 401px,#ff3608 457px,#ff1900 534px)"></i><i style="top:333px;height:3px;background:linear-gradient(90deg,#00ffb0 19px,#03ff91 192px,#26ff8a 223px,#64ff80 257px,#b5ff77 289px,#ffff6f 312px,#ffc14e 333px,#ff8a32 361px,#ff5c1b 399px,#ff3509 454px,#ff1700 537px)"></i><i style="top:336px;height:3px;background:linear-gradient(90deg,#00ffb4 20px,#03ff96 191px,#24ff8f 221px,#61ff86 254px,#afff7d 285px,#fffe75 310px,#ffc053 331px,#ff8935 359px,#ff5b1d 397px,#ff340a 452px,#ff1600 538px,#ff1500 541px)"></i><i style="top:339px;height:3px;background:linear-gradient(90deg,#00ffb8 20px,#03ff9c 190px,#24ff95 220px,#62ff8c 253px,#b1ff83 284px,#fffe7b 308px,#ffc258 328px,#ff8b3a 355px,#ff5d20 392px,#ff350c 446px,#ff1700 530px,#ff1300 544px)"></i><i style="top:342px;height:3px;background:linear-gradient(90deg,#00ffbd 21px,#03ffa1 190px,#26ff9a 220px,#63ff92 252px,#b4ff89 283px,#fffd81 306px,#ffc15d 326px,#ff8a3d 353px,#ff5c23 390px,#ff340e 444px,#ff1600 528px,#f10 548px)"></i><i style="top:345px;height:3px;background:linear-gradient(90deg,#00ffc1 22px,#03ffa7 189px,#25ffa0 218px,#61ff99 250px,#b0ff90 280px,#fffd88 304px,#ffc062 324px,#ff8940 351px,#ff5a25 388px,#ff330f 442px,#ff1501 526px,#ff1000 551px)"></i><i style="top:348px;height:3px;background:linear-gradient(90deg,#00ffc6 22px,#03ffad 188px,#25ffa6 217px,#62ff9f 249px,#b3ff97 279px,#fffc8e 302px,#ffbf67 322px,#ff8a45 348px,#ff5b28 384px,#ff3411 437px,#ff1602 519px,#ff0e00 555px)"></i><i style="top:351px;height:3px;background:linear-gradient(90deg,#00ffcb 23px,#03ffb3 188px,#26ffad 217px,#64ffa6 248px,#b3ff9e 277px,#ffff98 299px,#ffc06e 319px,#ff8a4a 345px,#ff5b2b 381px,#ff3413 433px,#ff1603 514px,#ff0c00 559px)"></i><i style="top:354px;height:3px;background:linear-gradient(90deg,#00ffd0 24px,#03ffb9 187px,#25ffb3 215px,#62ffad 246px,#b2ffa5 275px,#ffff9f 297px,#ffc275 316px,#ff8c50 341px,#ff5d30 376px,#ff3616 426px,#ff1704 504px,#ff0b00 562px)"></i><i style="top:357px;height:3px;background:linear-gradient(90deg,#00ffd5 24px,#03ffbf 186px,#25ffba 214px,#61ffb4 244px,#b2ffad 273px,#fffea7 295px,#ffc17a 314px,#ff8b54 339px,#ff5c33 374px,#ff3518 424px,#ff1605 502px,#ff0a00 566px)"></i><i style="top:360px;height:3px;background:linear-gradient(90deg,#00ffda 25px,#02ffc6 185px,#24ffc1 212px,#60ffbc 242px,#aeffb5 270px,#fffeaf 293px,#ffc080 312px,#ff8a58 337px,#ff5c36 371px,#ff341a 421px,#ff1606 499px,#ff0800 569px)"></i><i style="top:363px;height:3px;background:linear-gradient(90deg,#00ffe0 25px,#03ffcd 185px,#25ffc9 212px,#63ffc3 242px,#b4ffbd 270px,#fffdb7 291px,#ffc288 309px,#ff8c5f 333px,#ff5e3b 366px,#ff361e 414px,#ff1708 489px,#ff0700 573px)"></i><i style="top:366px;height:3px;background:linear-gradient(90deg,#00ffe5 26px,#03ffd4 184px,#25ffd0 211px,#62ffcb 240px,#b3ffc6 268px,#fffdc0 289px,#ffc18f 307px,#ff8b63 331px,#ff5c3e 364px,#ff3520 412px,#ff1609 487px,#ff0600 576px)"></i><i style="top:369px;height:3px;background:linear-gradient(90deg,#00ffeb 27px,#03ffdc 183px,#24ffd8 209px,#61ffd4 238px,#afffcf 265px,#fffcc9 287px,#ffc095 305px,#ff8a68 329px,#ff5b41 362px,#ff3422 410px,#ff160a 485px,#ff0500 580px)"></i><i style="top:372px;height:3px;background:linear-gradient(90deg,#00fff1 27px,#03ffe4 183px,#26ffe0 209px,#62ffdc 237px,#b2ffd8 264px,#feffd5 284px,#ffbe9c 303px,#ff886d 327px,#ff5a45 360px,#ff3324 408px,#ff150b 483px,#ff0400 583px)"></i><i style="top:375px;height:3px;background:linear-gradient(90deg,#00fff7 28px,#03ffec 182px,#26ffe9 208px,#63ffe5 236px,#b2ffe2 262px,#ffffdf 282px,#ffc0a6 300px,#ff8b75 323px,#ff5c4b 355px,#ff3528 401px,#ff160e 473px,#ff0300 587px)"></i><i style="top:378px;height:3px;background:linear-gradient(90deg,#00fffe 29px,#03fff4 181px,#24fff2 206px,#62ffef 234px,#b1ffec 260px,#ffffe9 280px,#ffc2b0 297px,#ff8b7c 320px,#ff5d50 351px,#ff362c 396px,#ff1710 466px,#ff0300 581px,#ff0200 590px)"></i><i style="top:381px;height:3px;background:linear-gradient(90deg,#00faff 29px,#02fffd 180px,#24fffb 205px,#60fff9 232px,#b1fff6 258px,#fffef4 278px,#ffc1b7 295px,#ff8c83 317px,#ff5d55 348px,#ff352f 393px,#ff1612 463px,#ff0300 577px,#ff0100 594px)"></i><i style="top:384px;height:3px;background:linear-gradient(90deg,#00f3ff 30px,#03f8ff 180px,#25faff 205px,#63fbff 232px,#b2fdff 257px,#fffeff 276px,#ffc3c3 292px,#ff8c8b 314px,#ff5e5c 344px,#ff3734 387px,#ff1815 453px,#ff0302 562px,#ff0100 597px)"></i><i style="top:387px;height:3px;background:linear-gradient(90deg,#00edff 31px,#03f0ff 179px,#24f0ff 204px,#60f1ff 231px,#aef2ff 256px,#fff0fc 277px,#ffb6be 294px,#ff8389 316px,#ff5659 347px,#ff3233 391px,#ff1514 459px,#ff0201 571px,#f00 601px)"></i><i style="top:390px;height:3px;background:linear-gradient(90deg,#00e7ff 32px,#03e8ff 179px,#25e8ff 204px,#60e8ff 231px,#ade8ff 256px,#ffe7fe 277px,#ffafc0 294px,#ff7e8b 316px,#ff545c 346px,#ff3034 390px,#ff1415 458px,#ff0202 569px,#f00 604px)"></i><i style="top:393px;height:3px;background:linear-gradient(90deg,#00e1ff 32px,#03dfff 178px,#24dfff 203px,#5edfff 230px,#acdeff 256px,#ffdbfc 278px,#ffa6bf 295px,#ff7688 318px,#ff4d5a 349px,#ff2b33 394px,#ff1114 464px,#ff0101 578px,#f00 608px)"></i><i style="top:396px;height:3px;background:linear-gradient(90deg,#00dbff 33px,#02d8ff 177px,#22d7ff 202px,#5ed6ff 230px,#abd4ff 256px,#ffd2fe 278px,#ff9fc1 295px,#ff718a 318px,#ff4a5b 349px,#ff2934 394px,#ff1015 463px,#ff0002 577px,#f00 612px)"></i><i style="top:399px;height:3px;background:linear-gradient(90deg,#00d5ff 34px,#03d0ff 177px,#25cfff 203px,#60cdff 231px,#aecbff 257px,#fec9ff 278px,#ff94bd 297px,#ff6988 320px,#ff4459 352px,#ff2533 398px,#ff0d14 469px,#ff0001 586px,#f00 615px)"></i><i style="top:402px;height:3px;background:linear-gradient(90deg,#00d0ff 34px,#03c9ff 176px,#24c7ff 202px,#5ec5ff 230px,#adc2ff 257px,#ffbffe 279px,#ff8ebf 297px,#ff658a 320px,#ff415b 352px,#ff2334 398px,#ff0c15 469px,#ff0002 586px,#f00 619px)"></i><i style="top:405px;height:3px;background:linear-gradient(90deg,#00caff 35px,#03c1ff 176px,#26bfff 203px,#63bcff 232px,#b3b9ff 259px,#feb7ff 279px,#ff86be 298px,#ff5e88 322px,#ff3b59 355px,#ff1f32 403px,#ff0913 477px,#ff0001 596px,#f00 622px)"></i><i style="top:408px;height:3px;background:linear-gradient(90deg,#00c5ff 36px,#03baff 175px,#25b8ff 202px,#61b4ff 231px,#afb1ff 258px,#ffadfd 280px,#ff81c0 298px,#ff5989 322px,#ff385a 355px,#ff1d33 402px,#ff0915 475px,#ff0002 593px,#f00 626px)"></i><i style="top:411px;height:3px;background:linear-gradient(90deg,#00bfff 37px,#03b4ff 175px,#25b1ff 202px,#61adff 231px,#aea9ff 258px,#ffa5ff 280px,#ff79bf 299px,#ff5489 323px,#ff345a 356px,#ff1a33 404px,#ff0714 478px,#ff0001 598px,#f00 629px)"></i><i style="top:414px;height:3px;background:linear-gradient(90deg,#00baff 37px,#03adff 174px,#24aaff 201px,#61a5ff 231px,#b0a1ff 259px,#ff9cfd 281px,#ff74c1 299px,#ff508b 323px,#ff325c 356px,#ff1934 404px,#ff0615 478px,#ff0002 599px,#f00 633px)"></i><i style="top:417px;height:3px;background:linear-gradient(90deg,#00b5ff 38px,#03a7ff 173px,#23a3ff 200px,#5e9eff 230px,#ac99ff 258px,#ff95ff 281px,#ff6ec3 299px,#ff4c8c 323px,#ff2f5d 356px,#ff1735 404px,#ff0516 477px,#ff0002 597px,#f00 636px)"></i><i style="top:420px;height:3px;background:linear-gradient(90deg,#00afff 39px,#03a1ff 173px,#259cff 201px,#6197ff 231px,#af92ff 259px,#ff8cfd 282px,#ff66bf 301px,#ff4589 326px,#ff2a5a 360px,#ff1333 409px,#ff0415 485px,#ff0001 610px,#f00 640px)"></i><i style="top:423px;height:3px;background:linear-gradient(90deg,#0af 40px,#039bff 172px,#2496ff 200px,#5f91ff 230px,#ae8bff 259px,#ff85ff 282px,#ff61c1 301px,#ff428a 326px,#ff275b 360px,#ff1234 409px,#ff0315 485px,#ff0002 610px,#f00 643px)"></i><i style="top:426px;height:3px;background:linear-gradient(90deg,#00a5ff 41px,#0395ff 172px,#2690ff 201px,#638aff 232px,#b383ff 261px,#ff7dfd 283px,#ff5bc0 302px,#ff3d8a 327px,#ff245a 362px,#ff0f33 412px,#ff0215 489px,#ff0002 616px,#f00 647px)"></i><i style="top:429px;height:3px;background:linear-gradient(90deg,#00a1ff 41px,#038fff 171px,#258aff 200px,#6184ff 231px,#af7dff 260px,#ff77fe 283px,#ff56c2 302px,#ff3a8b 327px,#ff215c 362px,#ff0e34 412px,#ff0115 489px,#ff0002 616px,#f00 650px)"></i><i style="top:432px;height:3px;background:linear-gradient(90deg,#009cff 42px,#038aff 170px,#2484ff 199px,#5f7eff 230px,#ac77ff 259px,#ff6ffc 284px,#ff4fbe 304px,#ff3488 330px,#ff1d59 366px,#ff0b32 418px,#ff0014 498px,#ff0001 630px,#f00 652px)"></i><i style="top:435px;height:3px;background:linear-gradient(90deg,#0097ff 43px,#0384ff 170px,#247fff 199px,#6178ff 231px,#b170ff 261px,#ff69fe 284px,#ff4bc0 304px,#ff3189 330px,#ff1b5a 366px,#ff0a33 418px,#ff0014 498px,#ff0001 629px,#f00 648px)"></i><i style="top:438px;height:3px;background:linear-gradient(90deg,#0093ff 44px,#037fff 169px,#2379ff 198px,#5f72ff 230px,#ad6aff 260px,#ff62fc 285px,#ff45bf 305px,#ff2d89 331px,#ff185a 367px,#ff0833 419px,#ff0015 499px,#ff0001 631px,#ff0001 640px)"></i><i style="top:441px;height:3px;background:linear-gradient(90deg,#008eff 45px,#037aff 169px,#2574ff 199px,#616cff 231px,#af64ff 261px,#ff5dfe 285px,#ff41c0 305px,#ff2a8b 331px,#ff165c 367px,#ff0734 419px,#ff0015 499px,#ff0002 631px,#ff0002 633px)"></i><i style="top:444px;height:3px;background:linear-gradient(90deg,#008aff 46px,#0375ff 168px,#246fff 198px,#6167ff 231px,#af5fff 261px,#ff56fc 286px,#ff3cc0 306px,#ff2689 333px,#ff135a 370px,#ff0533 423px,#ff0014 505px,#ff0002 625px)"></i><i style="top:447px;height:3px;background:linear-gradient(90deg,#0085ff 46px,#0370ff 168px,#256aff 198px,#6161ff 231px,#b159ff 262px,#ff51fe 286px,#ff38c1 306px,#ff238a 333px,#ff115b 370px,#ff0434 423px,#ff0015 505px,#ff0003 618px)"></i><i style="top:450px;height:3px;background:linear-gradient(90deg,#0081ff 47px,#036cff 167px,#2565ff 198px,#615cff 231px,#b054ff 262px,#ff4cff 286px,#ff34c0 307px,#ff208a 334px,#ff0f5b 371px,#ff0334 425px,#ff0015 508px,#ff0004 610px)"></i><i style="top:453px;height:3px;background:linear-gradient(90deg,#007dff 48px,#0367ff 166px,#2460ff 197px,#5f58ff 230px,#ad4fff 261px,#ff46fe 287px,#ff2fbf 308px,#ff1c88 336px,#ff0d59 374px,#ff0232 429px,#ff0014 514px,#ff0005 603px)"></i><i style="top:456px;height:3px;background:linear-gradient(90deg,#0079ff 49px,#0363ff 166px,#255cff 197px,#6253ff 231px,#b249ff 263px,#ff41ff 287px,#ff2cc1 308px,#ff1a8a 336px,#ff0b5b 374px,#ff0133 429px,#ff0015 514px,#ff0007 595px)"></i><i style="top:459px;height:3px;background:linear-gradient(90deg,#0075ff 50px,#035fff 165px,#2457ff 196px,#5f4eff 230px,#ae45ff 262px,#ff3cfd 288px,#ff28c0 309px,#ff178a 337px,#ff095b 375px,#ff0034 430px,#ff0015 515px,#ff0008 587px)"></i><i style="top:462px;height:3px;background:linear-gradient(90deg,#0071ff 51px,#035aff 165px,#2653ff 197px,#624aff 231px,#b040ff 263px,#ff38ff 288px,#ff25c2 309px,#ff148b 337px,#ff085c 375px,#ff0035 430px,#ff0016 515px,#ff0009 580px)"></i><i style="top:465px;height:3px;background:linear-gradient(90deg,#006dff 52px,#0356ff 164px,#254fff 196px,#6245ff 231px,#af3cff 263px,#ff33fd 289px,#ff20bf 311px,#f18 340px,#ff0559 380px,#ff0032 437px,#ff0014 526px,#ff000b 572px)"></i><i style="top:468px;height:3px;background:linear-gradient(90deg,#0069ff 53px,#0353ff 163px,#244bff 195px,#6041ff 230px,#af37ff 263px,#ff2fff 289px,#ff1dc0 311px,#ff0f89 340px,#ff045a 380px,#f03 437px,#ff0014 525px,#ff000d 565px)"></i><i style="top:471px;height:3px;background:linear-gradient(90deg,#0065ff 54px,#034fff 163px,#2647ff 196px,#623dff 231px,#b133ff 264px,#ff2afd 290px,#ff1abf 312px,#ff0d89 341px,#ff035a 381px,#f03 439px,#ff0014 528px,#ff000e 557px)"></i><i style="top:474px;height:3px;background:linear-gradient(90deg,#0061ff 55px,#034bff 162px,#2543ff 195px,#6239ff 231px,#b02fff 264px,#ff26fe 290px,#ff17c1 312px,#ff0b8a 341px,#ff025b 381px,#f03 439px,#ff0015 528px,#ff0010 549px)"></i><i style="top:477px;height:3px;background:linear-gradient(90deg,#005eff 56px,#0347ff 162px,#253fff 195px,#6235ff 231px,#af2bff 264px,#ff22fd 291px,#ff14c0 313px,#ff098a 342px,#ff015b 382px,#ff0034 440px,#ff0015 529px,#ff0012 542px)"></i><i style="top:480px;height:3px;background:linear-gradient(90deg,#005aff 57px,#0344ff 161px,#243cff 194px,#6032ff 230px,#af28ff 264px,#ff1ffe 291px,#ff12c1 313px,#ff078b 342px,#ff005c 382px,#ff0035 440px,#ff0016 529px,#ff0015 534px)"></i><i style="top:483px;height:3px;background:linear-gradient(90deg,#0057ff 58px,#0341ff 161px,#2638ff 195px,#622eff 231px,#b124ff 265px,#ff1bfc 292px,#ff0ebe 315px,#ff0588 345px,#ff005a 386px,#ff0032 446px,#ff0017 527px)"></i><i style="top:486px;height:3px;background:linear-gradient(90deg,#0053ff 59px,#033dff 160px,#2535ff 194px,#622bff 231px,#b020ff 265px,#ff18fe 292px,#ff0cc0 315px,#ff048a 345px,#ff005b 386px,#f03 446px,#ff0019 519px)"></i><i style="top:489px;height:3px;background:linear-gradient(90deg,#0050ff 60px,#033aff 159px,#2432ff 193px,#6028ff 230px,#af1dff 265px,#ff14fc 293px,#ff0abf 316px,#ff0288 347px,#ff0059 389px,#ff0032 450px,#ff001c 512px)"></i><i style="top:492px;height:3px;background:linear-gradient(90deg,#004cff 61px,#0337ff 159px,#262eff 194px,#6224ff 231px,#b11aff 266px,#ff11fe 293px,#ff08c1 316px,#ff0189 347px,#ff005a 389px,#f03 450px,#ff001f 504px)"></i><i style="top:495px;height:3px;background:linear-gradient(90deg,#0049ff 62px,#0334ff 158px,#252bff 193px,#6221ff 231px,#b117ff 266px,#ff0efc 294px,#ff06c0 317px,#ff0089 348px,#ff005a 391px,#ff0032 453px,#f02 496px)"></i><i style="top:498px;height:3px;background:linear-gradient(90deg,#0046ff 63px,#0331ff 158px,#2528ff 193px,#621eff 231px,#b014ff 266px,#ff0cfe 294px,#ff04bf 318px,#ff0089 349px,#ff005a 392px,#f03 454px,#ff0025 489px)"></i><i style="top:501px;height:3px;background:linear-gradient(90deg,#0043ff 64px,#032eff 157px,#2526ff 192px,#601cff 230px,#af11ff 266px,#ff09fc 295px,#ff02be 319px,#ff0087 351px,#ff0058 395px,#ff0032 458px,#ff0028 481px)"></i><i style="top:504px;height:3px;background:linear-gradient(90deg,#0040ff 65px,#032cff 157px,#2623ff 193px,#6219ff 231px,#b10fff 267px,#ff07fd 295px,#ff01c0 319px,#ff0089 351px,#ff0059 395px,#ff0032 458px,#ff002c 474px)"></i><i style="top:507px;height:3px;background:linear-gradient(90deg,#003dff 66px,#0329ff 156px,#2520ff 192px,#6216ff 231px,#b10cff 267px,#ff05ff 295px,#ff00c1 319px,#ff008a 351px,#ff005a 395px,#f03 458px,#ff0030 466px)"></i><i style="top:510px;height:3px;background:linear-gradient(90deg,#003aff 68px,#0327ff 155px,#241eff 191px,#6014ff 230px,#b00aff 267px,#ff03fd 296px,#ff00c0 320px,#ff008a 352px,#ff005b 396px,#ff0034 459px)"></i><i style="top:513px;height:3px;background:linear-gradient(90deg,#0037ff 69px,#0324ff 155px,#261bff 192px,#6211ff 231px,#b208ff 268px,#ff02ff 296px,#ff00c2 320px,#ff008b 352px,#ff005c 396px,#ff0038 451px)"></i><i style="top:516px;height:3px;background:linear-gradient(90deg,#0034ff 70px,#0322ff 154px,#2519ff 191px,#620fff 231px,#b106ff 268px,#ff00fd 297px,#ff00bf 322px,#f08 355px,#ff0059 400px,#ff003d 443px)"></i><i style="top:519px;height:3px;background:linear-gradient(90deg,#0031ff 71px,#031fff 154px,#2616ff 191px,#620dff 231px,#b104ff 268px,#ff00fe 297px,#ff00c0 322px,#ff0089 355px,#ff005a 400px,#ff0042 436px)"></i><i style="top:522px;height:3px;background:linear-gradient(90deg,#002fff 72px,#031dff 153px,#2514ff 190px,#610bff 230px,#b003ff 268px,#ff00fd 298px,#ff00bf 323px,#ff0089 356px,#ff005a 402px,#ff0047 428px)"></i><i style="top:525px;height:3px;background:linear-gradient(90deg,#002cff 74px,#031bff 153px,#2612ff 191px,#6409ff 232px,#b401ff 270px,#ff00fe 298px,#ff00c1 323px,#ff008a 356px,#ff005b 402px,#ff004d 421px)"></i><i style="top:528px;height:3px;background:linear-gradient(90deg,#0029ff 75px,#0319ff 152px,#2610ff 190px,#6207ff 231px,#b100ff 269px,#ff00fd 299px,#ff00c0 324px,#ff0089 358px,#ff005a 404px,#ff0053 413px)"></i><i style="top:531px;height:3px;background:linear-gradient(90deg,#0027ff 76px,#0317ff 151px,#250eff 189px,#6106ff 230px,#b100ff 269px,#ff00fe 299px,#ff00bf 325px,#ff0089 359px,#ff005a 406px)"></i><i style="top:534px;height:3px;background:linear-gradient(90deg,#0024ff 78px,#0315ff 151px,#260cff 190px,#6304ff 231px,#b200ff 270px,#ff00fc 300px,#ff00bf 326px,#ff0089 360px,#ff0061 398px)"></i><i style="top:537px;height:3px;background:linear-gradient(90deg,#02f 79px,#0313ff 150px,#260bff 189px,#6303ff 231px,#b200ff 270px,#ff00fe 300px,#ff00c0 326px,#ff008a 360px,#ff0069 390px)"></i><i style="top:540px;height:3px;background:linear-gradient(90deg,#001fff 80px,#0311ff 150px,#2609ff 189px,#6301ff 231px,#b100ff 270px,#ff00fc 301px,#ff00bf 327px,#f08 362px,#ff0071 383px)"></i><i style="top:543px;height:3px;background:linear-gradient(90deg,#001dff 81px,#030fff 149px,#2508ff 188px,#6101ff 230px,#b100ff 270px,#ff00fe 301px,#ff00c1 327px,#ff008a 362px,#ff007a 375px)"></i><i style="top:546px;height:3px;background:linear-gradient(90deg,#001bff 83px,#030eff 149px,#2706ff 189px,#6400ff 232px,#b500ff 272px,#ff00fc 302px,#ff00be 329px,#f08 364px,#ff0083 368px)"></i><i style="top:549px;height:3px;background:linear-gradient(90deg,#0019ff 84px,#030cff 148px,#2605ff 188px,#6300ff 231px,#b200ff 271px,#ff00fd 302px,#ff00bf 329px,#ff008e 360px)"></i><i style="top:552px;height:3px;background:linear-gradient(90deg,#0016ff 86px,#030aff 148px,#2603ff 188px,#6300ff 231px,#b100ff 271px,#ff00fc 303px,#ff00bf 330px,#f09 353px)"></i><i style="top:555px;height:3px;background:linear-gradient(90deg,#0014ff 87px,#0309ff 147px,#2502ff 187px,#6300ff 231px,#b300ff 272px,#ff00fd 303px,#ff00c0 330px,#ff00a6 345px)"></i><i style="top:558px;height:3px;background:linear-gradient(90deg,#0012ff 88px,#0408ff 147px,#2701ff 188px,#6400ff 232px,#b500ff 273px,#ff00fc 304px,#ff00bf 331px,#ff00b4 337px)"></i><i style="top:561px;height:3px;background:linear-gradient(90deg,#0010ff 90px,#0306ff 146px,#2601ff 187px,#6300ff 231px,#b200ff 272px,#ff00fd 304px,#ff00c2 330px)"></i><i style="top:564px;height:3px;background:linear-gradient(90deg,#000fff 91px,#0405ff 146px,#2800ff 188px,#6500ff 232px,#b300ff 273px,#ff00fe 304px,#ff00d3 322px)"></i><i style="top:567px;height:3px;background:linear-gradient(90deg,#000dff 93px,#0304ff 145px,#2700ff 187px,#6500ff 232px,#b500ff 274px,#ff00fd 305px,#ff00e4 315px)"></i><i style="top:570px;height:3px;background:linear-gradient(90deg,#000bff 94px,#0403ff 145px,#2700ff 187px,#6500ff 232px,#b400ff 274px,#ff00fe 305px,#ff00f9 307px)"></i><i style="top:573px;height:3px;background:linear-gradient(90deg,#0009ff 96px,#0302ff 144px,#2600ff 186px,#6300ff 231px,#b200ff 273px,#f100ff 300px)"></i><i style="top:576px;height:3px;background:linear-gradient(90deg,#0008ff 98px,#0401ff 144px,#2800ff 187px,#60f 233px,#b500ff 275px,#dc00ff 292px)"></i><i style="top:579px;height:3px;background:linear-gradient(90deg,#0006ff 99px,#0401ff 143px,#2700ff 186px,#6500ff 232px,#b500ff 275px,#c900ff 284px)"></i><i style="top:582px;height:3px;background:linear-gradient(90deg,#0005ff 101px,#0400ff 143px,#2700ff 186px,#6500ff 232px,#b400ff 275px,#b900ff 277px)"></i><i style="top:585px;height:3px;background:linear-gradient(90deg,#0003ff 103px,#0400ff 142px,#2800ff 186px,#6500ff 232px,#a700ff 269px)"></i><i style="top:588px;height:3px;background:linear-gradient(90deg,#0002ff 105px,#0400ff 142px,#2800ff 186px,#60f 233px,#90f 262px)"></i><i style="top:591px;height:3px;background:linear-gradient(90deg,#0001ff 107px,#0400ff 142px,#2800ff 186px,#60f 233px,#8a00ff 254px)"></i><i style="top:594px;height:3px;background:linear-gradient(90deg,#00f 109px,#0500ff 142px,#2a00ff 187px,#6800ff 234px,#7d00ff 247px)"></i><i style="top:597px;height:3px;background:linear-gradient(90deg,#00f 111px,#0500ff 142px,#2a00ff 187px,#6900ff 235px,#7000ff 239px)"></i><i style="top:600px;height:3px;background:linear-gradient(90deg,#00f 113px,#0500ff 142px,#2b00ff 188px,#6300ff 231px)"></i><i style="top:603px;height:3px;background:linear-gradient(90deg,#00f 116px,#0700ff 144px,#2f00ff 191px,#5900ff 224px)"></i><i style="top:606px;height:3px;background:linear-gradient(90deg,#00f 119px,#0900ff 147px,#30f 194px,#4e00ff 216px)"></i><i style="top:609px;height:3px;background:linear-gradient(90deg,#00f 122px,#0d00ff 153px,#3b00ff 201px,#4500ff 209px)"></i><i style="top:612px;height:3px;background:linear-gradient(90deg,#00f 125px,#1400ff 162px,#3b00ff 201px)"></i><i style="top:615px;height:3px;background:linear-gradient(90deg,#00f 128px,#1b00ff 170px,#30f 194px)"></i><i style="top:618px;height:3px;background:linear-gradient(90deg,#0200ff 132px,#20f 177px,#2b00ff 186px)"></i><i style="top:621px;height:3px;background:linear-gradient(90deg,#0400ff 136px,#2300ff 178px)"></i><i style="top:624px;height:3px;background:linear-gradient(90deg,#0600ff 140px,#1d00ff 171px)"></i><i style="top:627px;height:3px;background:linear-gradient(90deg,#0900ff 144px,#1700ff 163px)"></i><i style="top:630px;height:3px;background:linear-gradient(90deg,#0c00ff 148px,#1200ff 156px)"></i><i style="top:0;height:633px;background:rgba(0,0,0,.4);clip-path:polygon(evenodd,0 0,744px 0,744px 633px,0 633px,0 0,597.8px 390.6px,233.2px 116px,133.3px 586.8px,597.8px 390.6px,0 0)"></i></div>
<div class="a" style="left:1644px;top:142.5px;width:260px;height:246px;background:#1d1d1d"></div>
<div class="a" style="left:1647px;top:145.5px;width:254px;height:240px;background:#8a8a8a"></div>
<div class="cie" style="left:1649px;top:147.5px;width:250px;height:236px"><i style="top:0px;height:4px;background:linear-gradient(90deg,#53ffc9 0px,#a0ffc3 164px,#d3ffc0 250px)"></i><i style="top:4px;height:4px;background:linear-gradient(90deg,#53ffcb 0px,#a1ffc5 164px,#d4ffc2 250px)"></i><i style="top:8px;height:4px;background:linear-gradient(90deg,#54ffcc 0px,#a2ffc7 163px,#d6ffc4 250px)"></i><i style="top:12px;height:4px;background:linear-gradient(90deg,#55ffce 0px,#a3ffc9 163px,#d7ffc6 250px)"></i><i style="top:16px;height:4px;background:linear-gradient(90deg,#55ffd0 0px,#a4ffca 162px,#d9ffc7 250px)"></i><i style="top:20px;height:4px;background:linear-gradient(90deg,#56ffd1 0px,#a4ffcc 161px,#daffc9 250px)"></i><i style="top:24px;height:4px;background:linear-gradient(90deg,#57ffd3 0px,#a6ffce 161px,#dcffcb 250px)"></i><i style="top:28px;height:4px;background:linear-gradient(90deg,#58ffd5 0px,#a6ffd0 160px,#deffcd 250px)"></i><i style="top:32px;height:4px;background:linear-gradient(90deg,#58ffd7 0px,#a8ffd2 160px,#dfffcf 250px)"></i><i style="top:36px;height:4px;background:linear-gradient(90deg,#59ffd8 0px,#a8ffd4 159px,#e1ffd1 250px)"></i><i style="top:40px;height:4px;background:linear-gradient(90deg,#5affda 0px,#a9ffd6 158px,#e3ffd3 250px)"></i><i style="top:44px;height:4px;background:linear-gradient(90deg,#5bffdc 0px,#aaffd8 158px,#e4ffd5 250px)"></i><i style="top:48px;height:4px;background:linear-gradient(90deg,#5bffde 0px,#abffda 157px,#e6ffd7 250px)"></i><i style="top:52px;height:4px;background:linear-gradient(90deg,#5cffe0 0px,#acffdc 156px,#e8ffd9 250px)"></i><i style="top:56px;height:4px;background:linear-gradient(90deg,#5dffe2 0px,#adffde 156px,#eaffdb 250px)"></i><i style="top:60px;height:4px;background:linear-gradient(90deg,#5effe4 0px,#aeffe0 155px,#ebffdd 250px)"></i><i style="top:64px;height:4px;background:linear-gradient(90deg,#5effe6 0px,#afffe2 155px,#edffdf 250px)"></i><i style="top:68px;height:4px;background:linear-gradient(90deg,#5fffe7 0px,#b0ffe4 154px,#efffe1 250px)"></i><i style="top:72px;height:4px;background:linear-gradient(90deg,#60ffe9 0px,#b1ffe6 153px,#f1ffe4 250px)"></i><i style="top:76px;height:4px;background:linear-gradient(90deg,#61ffeb 0px,#b2ffe8 153px,#f3ffe6 250px)"></i><i style="top:80px;height:4px;background:linear-gradient(90deg,#62ffed 0px,#b3ffea 152px,#f5ffe8 250px)"></i><i style="top:84px;height:4px;background:linear-gradient(90deg,#63ffef 0px,#b4ffec 152px,#f6ffea 250px)"></i><i style="top:88px;height:4px;background:linear-gradient(90deg,#63fff1 0px,#b5ffef 151px,#f8ffec 250px)"></i><i style="top:92px;height:4px;background:linear-gradient(90deg,#64fff4 0px,#b6fff1 150px,#faffef 250px)"></i><i style="top:96px;height:4px;background:linear-gradient(90deg,#65fff6 0px,#b7fff3 150px,#fcfff1 250px)"></i><i style="top:100px;height:4px;background:linear-gradient(90deg,#66fff8 0px,#b8fff5 149px,#fefff3 250px)"></i><i style="top:104px;height:4px;background:linear-gradient(90deg,#67fffa 0px,#b9fff8 149px,#fffef5 250px)"></i><i style="top:108px;height:4px;background:linear-gradient(90deg,#68fffc 0px,#bafffa 148px,#fffdf6 249px,#fffcf5 250px)"></i><i style="top:112px;height:4px;background:linear-gradient(90deg,#69fffe 0px,#bbfffc 147px,#fffcf8 247px,#fffaf6 250px)"></i><i style="top:116px;height:4px;background:linear-gradient(90deg,#69feff 0px,#bdffff 147px,#fffcfb 244px,#fff8f6 250px)"></i><i style="top:120px;height:4px;background:linear-gradient(90deg,#69fbff 0px,#bafdff 143px,#fffcfd 242px,#fff6f6 250px)"></i><i style="top:124px;height:4px;background:linear-gradient(90deg,#69f9ff 0px,#bbfbff 144px,#fff9fc 243px,#fff4f7 250px)"></i><i style="top:128px;height:4px;background:linear-gradient(90deg,#69f7ff 0px,#baf8ff 144px,#fff6fc 244px,#fff2f7 250px)"></i><i style="top:132px;height:4px;background:linear-gradient(90deg,#69f5ff 0px,#baf6ff 144px,#fff4fc 244px,#fff0f8 250px)"></i><i style="top:136px;height:4px;background:linear-gradient(90deg,#69f3ff 0px,#bbf4ff 145px,#fff2fc 245px,#ffeef8 250px)"></i><i style="top:140px;height:4px;background:linear-gradient(90deg,#69f1ff 0px,#baf2ff 145px,#fff0fc 245px,#ffecf9 250px)"></i><i style="top:144px;height:4px;background:linear-gradient(90deg,#69efff 0px,#baefff 145px,#ffedfc 246px,#ffeaf9 250px)"></i><i style="top:148px;height:4px;background:linear-gradient(90deg,#69edff 0px,#bbedff 146px,#ffebfd 246px,#ffe9fa 250px)"></i><i style="top:152px;height:4px;background:linear-gradient(90deg,#69ebff 0px,#baebff 146px,#ffe9fc 247px,#ffe7fa 250px)"></i><i style="top:156px;height:4px;background:linear-gradient(90deg,#69e9ff 0px,#bae9ff 146px,#ffe6fc 248px,#ffe5fa 250px)"></i><i style="top:160px;height:4px;background:linear-gradient(90deg,#69e7ff 0px,#bae7ff 147px,#ffe4fc 248px,#ffe3fb 250px)"></i><i style="top:164px;height:4px;background:linear-gradient(90deg,#69e5ff 0px,#bae4ff 147px,#ffe2fc 249px,#ffe1fb 250px)"></i><i style="top:168px;height:4px;background:linear-gradient(90deg,#69e3ff 0px,#bae2ff 147px,#ffe0fc 249px,#ffdffc 250px)"></i><i style="top:172px;height:4px;background:linear-gradient(90deg,#69e1ff 0px,#bae0ff 148px,#ffddfc 250px)"></i><i style="top:176px;height:4px;background:linear-gradient(90deg,#69dfff 0px,#badeff 148px,#ffdcfd 250px)"></i><i style="top:180px;height:4px;background:linear-gradient(90deg,#69ddff 0px,#badcff 148px,#ffdafd 250px)"></i><i style="top:184px;height:4px;background:linear-gradient(90deg,#69dbff 0px,#badaff 149px,#ffd8fd 250px)"></i><i style="top:188px;height:4px;background:linear-gradient(90deg,#69d9ff 0px,#bad8ff 149px,#ffd6fe 250px)"></i><i style="top:192px;height:4px;background:linear-gradient(90deg,#69d7ff 0px,#bad6ff 149px,#ffd4fe 250px)"></i><i style="top:196px;height:4px;background:linear-gradient(90deg,#69d5ff 0px,#bad4ff 150px,#ffd3ff 250px)"></i><i style="top:200px;height:4px;background:linear-gradient(90deg,#69d3ff 0px,#bad2ff 150px,#ffd1ff 250px)"></i><i style="top:204px;height:4px;background:linear-gradient(90deg,#69d1ff 0px,#bad0ff 150px,#feceff 250px)"></i><i style="top:208px;height:4px;background:linear-gradient(90deg,#69cfff 0px,#baceff 151px,#feccff 250px)"></i><i style="top:212px;height:4px;background:linear-gradient(90deg,#69cdff 0px,#baccff 151px,#fecaff 250px)"></i><i style="top:216px;height:4px;background:linear-gradient(90deg,#69ccff 0px,#bacaff 151px,#fdc8ff 250px)"></i><i style="top:220px;height:4px;background:linear-gradient(90deg,#69caff 0px,#bac8ff 152px,#fdc6ff 250px)"></i><i style="top:224px;height:4px;background:linear-gradient(90deg,#69c8ff 0px,#bac6ff 152px,#fcc4ff 250px)"></i><i style="top:228px;height:4px;background:linear-gradient(90deg,#69c6ff 0px,#bac4ff 152px,#fcc2ff 250px)"></i><i style="top:232px;height:4px;background:linear-gradient(90deg,#69c4ff 0px,#bac2ff 153px,#fbc0ff 250px)"></i></div>
<div class="a" style="left:723.4px;top:837px;width:828.6px;height:39.6px;background:linear-gradient(180deg,#2c2c2c 0,#303030 49%,#1b1b1b 50%,#0b0b0b 100%)"></div>
<div class="a" style="left:723.4px;top:837px;width:23.3px;height:39.6px;background:#000"></div>
<div class="a" style="left:723.4px;top:876.6px;width:828.6px;height:36.4px;background:#454545"></div>
<div class="a" style="left:723.4px;top:876.6px;width:23.3px;height:36.4px;background:linear-gradient(180deg,#333,#1e1e1e)"></div>
<div class="a" style="left:723.4px;top:913px;width:828.6px;height:36.4px;background:#848484"></div>
<div class="a" style="left:723.4px;top:913px;width:23.3px;height:36.4px;background:linear-gradient(180deg,#333,#1e1e1e)"></div>
<div class="a" style="left:723.4px;top:949.4px;width:828.6px;height:36.4px;background:#454545"></div>
<div class="a" style="left:723.4px;top:949.4px;width:23.3px;height:36.4px;background:linear-gradient(180deg,#333,#1e1e1e)"></div>
<div class="a" style="left:723.4px;top:985.8px;width:828.6px;height:36.4px;background:#848484"></div>
<div class="a" style="left:723.4px;top:985.8px;width:23.3px;height:36.4px;background:linear-gradient(180deg,#333,#1e1e1e)"></div>
<div class="a" style="left:723.4px;top:1022.2px;width:828.6px;height:36.4px;background:#454545"></div>
<div class="a" style="left:723.4px;top:1022.2px;width:23.3px;height:36.4px;background:linear-gradient(180deg,#333,#1e1e1e)"></div>
<div class="a" style="left:723.4px;top:1058.6px;width:828.6px;height:36.4px;background:#848484"></div>
<div class="a" style="left:723.4px;top:1058.6px;width:23.3px;height:36.4px;background:linear-gradient(180deg,#333,#1e1e1e)"></div>
<div class="a" style="left:1px;top:1132.6px;width:1918px;height:52.4px;background:linear-gradient(180deg,#484848 0,#444 12%,#353535 55%,#282828 100%)"></div>
<div class="a" style="left:1878px;top:1132.6px;width:41px;height:26.4px;background:linear-gradient(180deg,#2c2c2c,#343434)"></div>
<div class="a" style="left:2.2px;top:1132.5px;width:37.5px;height:52px;border-radius:3px 3px 0 0;background:linear-gradient(180deg,#8a8a8a,#5c5c5c);border:1px solid #8f8f8f;border-bottom:none"></div>
<div class="a" style="left:14.5px;top:1134px;width:12px;height:12px;border-radius:50%;background:linear-gradient(180deg,#5a5a5a,#8a8a8a)"></div>
<div class="a" style="left:6.5px;top:1155px;width:29.2px;height:25px;background:#0ff;border-radius:2px"></div>
<div class="a" style="left:44.4px;top:1132.5px;width:127.6px;height:52.5px;border-radius:3px 3px 0 0;background:linear-gradient(180deg,#232323,#2e2e2e);box-shadow:inset 0 2px 3px #151515"></div>
<div class="a" style="left:49.1px;top:1136.9px;width:118.7px;height:30.4px;border-radius:3px;background:#a5c2c2;border:1px solid #111"></div>
<div class="a" style="left:173.45px;top:1132.5px;width:127.6px;height:51.3px;border-radius:3px;background:linear-gradient(180deg,#939393 0,#7a7a7a 55%,#585858 100%);border:1px solid #8a8a8a"></div>
<div class="a" style="left:178.15px;top:1137.2px;width:118.7px;height:30.4px;border-radius:3px;background:#8fc3c3;border:1px solid #6d8f8f"></div>
<div class="a" style="left:302.5px;top:1132.5px;width:127.6px;height:51.3px;border-radius:3px;background:linear-gradient(180deg,#939393 0,#7a7a7a 55%,#585858 100%);border:1px solid #8a8a8a"></div>
<div class="a" style="left:307.2px;top:1137.2px;width:118.7px;height:30.4px;border-radius:3px;background:#78c3c3;border:1px solid #6d8f8f"></div>
<div class="a" style="left:431.55px;top:1132.5px;width:127.6px;height:51.3px;border-radius:3px;background:linear-gradient(180deg,#939393 0,#7a7a7a 55%,#585858 100%);border:1px solid #8a8a8a"></div>
<div class="a" style="left:436.25px;top:1137.2px;width:118.7px;height:30.4px;border-radius:3px;background:#55c3c3;border:1px solid #6d8f8f"></div>
<div class="a" style="left:560.6px;top:1132.5px;width:127.6px;height:51.3px;border-radius:3px;background:linear-gradient(180deg,#939393 0,#7a7a7a 55%,#585858 100%);border:1px solid #8a8a8a"></div>
<div class="a" style="left:565.3px;top:1137.2px;width:118.7px;height:30.4px;border-radius:3px;background:#00c2c2;border:1px solid #6d8f8f"></div>
<div class="a" style="left:1645.3px;top:1132.5px;width:40.7px;height:15.8px;border-radius:3px 0 0 0;background:linear-gradient(180deg,#9a9a9a,#858585);border:1px solid #aaa;border-bottom:1px solid #555"></div>
<div class="a" style="left:1659.5px;top:1133.3px;width:13px;height:13px;border-radius:50%;background:linear-gradient(180deg,#6a6a6a,#9a9a9a)"></div>
<div class="a" style="left:1645.3px;top:1148.6px;width:40.7px;height:36.4px;background:linear-gradient(180deg,#8c8c8c,#606060);border:1px solid #999;border-bottom:none"></div>
<div class="a" style="left:1652.4px;top:1153.4px;width:26.2px;height:25.4px;border-radius:3px;border:2px solid #1a1a1a;background:linear-gradient(180deg,#cfcfcf 0,#c4c4c4 50%,#a8a8a8 51%,#9a9a9a 100%)"></div>
<div class="a" style="left:1660px;top:1160.4px;width:12px;height:12.4px;background:#000"></div>
<div class="a" style="left:1687.1px;top:1132.5px;width:38.6px;height:25.3px;background:linear-gradient(180deg,#9a9a9a 0,#7c7c7c 50%,#636363 100%);border:1px solid #a6a6a6;border-bottom:1px solid #555;border-radius:3px 0 0 0;"></div>
<div class="a" style="left:1697.9px;top:1136.5px;width:17px;height:17px;border-radius:50%;background:linear-gradient(180deg,#7d7d7d,#a0a0a0)"></div>
<div class="a" style="left:1726.3px;top:1132.5px;width:37.5px;height:25.3px;background:linear-gradient(180deg,#9a9a9a 0,#7c7c7c 50%,#636363 100%);border:1px solid #a6a6a6;border-bottom:1px solid #555;"></div>
<div class="a" style="left:1736.55px;top:1136.5px;width:17px;height:17px;border-radius:50%;background:linear-gradient(180deg,#7d7d7d,#a0a0a0)"></div>
<div class="a" style="left:1764.4px;top:1132.5px;width:37.4px;height:25.3px;background:linear-gradient(180deg,#9a9a9a 0,#7c7c7c 50%,#636363 100%);border:1px solid #a6a6a6;border-bottom:1px solid #555;"></div>
<div class="a" style="left:1774.6px;top:1136.5px;width:17px;height:17px;border-radius:50%;background:linear-gradient(180deg,#7d7d7d,#a0a0a0)"></div>
<div class="a" style="left:1802.4px;top:1132.5px;width:37.5px;height:25.3px;background:linear-gradient(180deg,#9a9a9a 0,#7c7c7c 50%,#636363 100%);border:1px solid #a6a6a6;border-bottom:1px solid #555;"></div>
<div class="a" style="left:1812.65px;top:1136.5px;width:17px;height:17px;border-radius:50%;background:linear-gradient(180deg,#7d7d7d,#a0a0a0)"></div>
<div class="a" style="left:1840.5px;top:1132.5px;width:37.3px;height:25.3px;background:linear-gradient(180deg,#9a9a9a 0,#7c7c7c 50%,#636363 100%);border:1px solid #a6a6a6;border-bottom:1px solid #555;border-radius:0 3px 0 0;"></div>
<div class="a" style="left:1850.65px;top:1136.5px;width:17px;height:17px;border-radius:50%;background:linear-gradient(180deg,#7d7d7d,#a0a0a0)"></div>
<div class="a" style="left:1889.5px;top:1137px;width:17px;height:17px;border-radius:50%;background:linear-gradient(180deg,#333,#3c3c3c)"></div>
<div class="a" style="left:1687.1px;top:1159px;width:115.2px;height:26px;border-radius:3px 0 0 0;background:linear-gradient(180deg,#9a9a9a 0,#7c7c7c 50%,#636363 100%);border:1px solid #a6a6a6;border-bottom:none"></div>
<div class="a" style="left:1802.9px;top:1159px;width:115.3px;height:26px;border-radius:0 3px 0 0;background:linear-gradient(180deg,#9a9a9a 0,#7c7c7c 50%,#636363 100%);border:1px solid #a6a6a6;border-bottom:none"></div>
<div class="a" style="left:1704.9px;top:1163px;width:17px;height:17px;border-radius:50%;background:linear-gradient(180deg,#7d7d7d,#a6a6a6)"></div>
<div class="a" style="left:1885.5px;top:1163px;width:17px;height:17px;border-radius:50%;background:linear-gradient(180deg,#7d7d7d,#a6a6a6)"></div>
<div class="a" style="left:0px;top:1185px;width:1920px;height:1px;background:#2ba0e8"></div>
<div class="a" style="left:1919px;top:0px;width:1px;height:1186px;background:#2ba0e8"></div>
<svg width="1920" height="1186" viewBox="0 0 1920 1186">
<defs><linearGradient id="g1" x1="0" x2="1" y1="0" y2="0"><stop offset="0" stop-color="rgb(226,82,82)"/><stop offset=".3" stop-color="rgb(215,15,15)"/><stop offset=".7" stop-color="rgb(189,13,13)"/><stop offset="1" stop-color="rgb(97,7,7)"/></linearGradient><linearGradient id="g2" x1="0" x2="1" y1="0" y2="0"><stop offset="0" stop-color="rgb(71,215,71)"/><stop offset=".3" stop-color="rgb(0,200,0)"/><stop offset=".7" stop-color="rgb(0,176,0)"/><stop offset="1" stop-color="rgb(0,90,0)"/></linearGradient><linearGradient id="g3" x1="0" x2="1" y1="0" y2="0"><stop offset="0" stop-color="rgb(82,82,226)"/><stop offset=".3" stop-color="rgb(15,15,215)"/><stop offset=".7" stop-color="rgb(13,13,189)"/><stop offset="1" stop-color="rgb(7,7,97)"/></linearGradient><linearGradient id="g4" x1="0" x2="1" y1="0" y2="0"><stop offset="0" stop-color="rgb(71,215,215)"/><stop offset=".3" stop-color="rgb(0,200,200)"/><stop offset=".7" stop-color="rgb(0,176,176)"/><stop offset="1" stop-color="rgb(0,90,90)"/></linearGradient><linearGradient id="g5" x1="0" x2="1" y1="0" y2="0"><stop offset="0" stop-color="rgb(226,82,226)"/><stop offset=".3" stop-color="rgb(215,15,215)"/><stop offset=".7" stop-color="rgb(189,13,189)"/><stop offset="1" stop-color="rgb(97,7,97)"/></linearGradient><linearGradient id="g6" x1="0" x2="1" y1="0" y2="0"><stop offset="0" stop-color="rgb(226,226,82)"/><stop offset=".3" stop-color="rgb(215,215,15)"/><stop offset=".7" stop-color="rgb(189,189,13)"/><stop offset="1" stop-color="rgb(97,97,7)"/></linearGradient><linearGradient id="g7" x1="0" x2="1" y1="0" y2="0"><stop offset="0" stop-color="rgb(223,116,116)"/><stop offset=".3" stop-color="rgb(210,63,63)"/><stop offset=".7" stop-color="rgb(185,55,55)"/><stop offset="1" stop-color="rgb(95,28,28)"/></linearGradient><linearGradient id="g8" x1="0" x2="1" y1="0" y2="0"><stop offset="0" stop-color="rgb(116,223,116)"/><stop offset=".3" stop-color="rgb(63,210,63)"/><stop offset=".7" stop-color="rgb(55,185,55)"/><stop offset="1" stop-color="rgb(28,95,28)"/></linearGradient><linearGradient id="g9" x1="0" x2="1" y1="0" y2="0"><stop offset="0" stop-color="rgb(116,116,223)"/><stop offset=".3" stop-color="rgb(63,63,210)"/><stop offset=".7" stop-color="rgb(55,55,185)"/><stop offset="1" stop-color="rgb(28,28,95)"/></linearGradient><linearGradient id="g10" x1="0" x2="1" y1="0" y2="0"><stop offset="0" stop-color="rgb(116,223,223)"/><stop offset=".3" stop-color="rgb(63,210,210)"/><stop offset=".7" stop-color="rgb(55,185,185)"/><stop offset="1" stop-color="rgb(28,95,95)"/></linearGradient><linearGradient id="g11" x1="0" x2="1" y1="0" y2="0"><stop offset="0" stop-color="rgb(223,116,223)"/><stop offset=".3" stop-color="rgb(210,63,210)"/><stop offset=".7" stop-color="rgb(185,55,185)"/><stop offset="1" stop-color="rgb(95,28,95)"/></linearGradient><linearGradient id="g12" x1="0" x2="1" y1="0" y2="0"><stop offset="0" stop-color="rgb(223,223,116)"/><stop offset=".3" stop-color="rgb(210,210,63)"/><stop offset=".7" stop-color="rgb(185,185,55)"/><stop offset="1" stop-color="rgb(95,95,28)"/></linearGradient><linearGradient id="g13" x1="0" x2="1" y1="0" y2="0"><stop offset="0" stop-color="rgb(222,144,144)"/><stop offset=".3" stop-color="rgb(209,101,101)"/><stop offset=".7" stop-color="rgb(184,89,89)"/><stop offset="1" stop-color="rgb(94,46,46)"/></linearGradient><linearGradient id="g14" x1="0" x2="1" y1="0" y2="0"><stop offset="0" stop-color="rgb(144,222,144)"/><stop offset=".3" stop-color="rgb(101,209,101)"/><stop offset=".7" stop-color="rgb(89,184,89)"/><stop offset="1" stop-color="rgb(46,94,46)"/></linearGradient><linearGradient id="g15" x1="0" x2="1" y1="0" y2="0"><stop offset="0" stop-color="rgb(144,144,222)"/><stop offset=".3" stop-color="rgb(101,101,209)"/><stop offset=".7" stop-color="rgb(89,89,184)"/><stop offset="1" stop-color="rgb(46,46,94)"/></linearGradient><linearGradient id="g16" x1="0" x2="1" y1="0" y2="0"><stop offset="0" stop-color="rgb(144,222,222)"/><stop offset=".3" stop-color="rgb(101,209,209)"/><stop offset=".7" stop-color="rgb(89,184,184)"/><stop offset="1" stop-color="rgb(46,94,94)"/></linearGradient><linearGradient id="g17" x1="0" x2="1" y1="0" y2="0"><stop offset="0" stop-color="rgb(222,144,222)"/><stop offset=".3" stop-color="rgb(209,101,209)"/><stop offset=".7" stop-color="rgb(184,89,184)"/><stop offset="1" stop-color="rgb(94,46,94)"/></linearGradient><linearGradient id="g18" x1="0" x2="1" y1="0" y2="0"><stop offset="0" stop-color="rgb(222,222,144)"/><stop offset=".3" stop-color="rgb(209,209,101)"/><stop offset=".7" stop-color="rgb(184,184,89)"/><stop offset="1" stop-color="rgb(94,94,46)"/></linearGradient><linearGradient id="g19" x1="0" x2="1" y1="0" y2="0"><stop offset="0" stop-color="rgb(221,171,171)"/><stop offset=".3" stop-color="rgb(207,138,138)"/><stop offset=".7" stop-color="rgb(182,121,121)"/><stop offset="1" stop-color="rgb(93,62,62)"/></linearGradient><linearGradient id="g20" x1="0" x2="1" y1="0" y2="0"><stop offset="0" stop-color="rgb(171,221,171)"/><stop offset=".3" stop-color="rgb(138,207,138)"/><stop offset=".7" stop-color="rgb(121,182,121)"/><stop offset="1" stop-color="rgb(62,93,62)"/></linearGradient><linearGradient id="g21" x1="0" x2="1" y1="0" y2="0"><stop offset="0" stop-color="rgb(171,171,221)"/><stop offset=".3" stop-color="rgb(138,138,207)"/><stop offset=".7" stop-color="rgb(121,121,182)"/><stop offset="1" stop-color="rgb(62,62,93)"/></linearGradient><linearGradient id="g22" x1="0" x2="1" y1="0" y2="0"><stop offset="0" stop-color="rgb(171,221,221)"/><stop offset=".3" stop-color="rgb(138,207,207)"/><stop offset=".7" stop-color="rgb(121,182,182)"/><stop offset="1" stop-color="rgb(62,93,93)"/></linearGradient><linearGradient id="g23" x1="0" x2="1" y1="0" y2="0"><stop offset="0" stop-color="rgb(221,171,221)"/><stop offset=".3" stop-color="rgb(207,138,207)"/><stop offset=".7" stop-color="rgb(182,121,182)"/><stop offset="1" stop-color="rgb(93,62,93)"/></linearGradient><linearGradient id="g24" x1="0" x2="1" y1="0" y2="0"><stop offset="0" stop-color="rgb(221,221,171)"/><stop offset=".3" stop-color="rgb(207,207,138)"/><stop offset=".7" stop-color="rgb(182,182,121)"/><stop offset="1" stop-color="rgb(93,93,62)"/></linearGradient><linearGradient id="g25" x1="0" x2="1" y1="0" y2="0"><stop offset="0" stop-color="rgb(219,196,196)"/><stop offset=".3" stop-color="rgb(206,173,173)"/><stop offset=".7" stop-color="rgb(181,153,153)"/><stop offset="1" stop-color="rgb(93,78,78)"/></linearGradient><linearGradient id="g26" x1="0" x2="1" y1="0" y2="0"><stop offset="0" stop-color="rgb(196,219,196)"/><stop offset=".3" stop-color="rgb(173,206,173)"/><stop offset=".7" stop-color="rgb(153,181,153)"/><stop offset="1" stop-color="rgb(78,93,78)"/></linearGradient><linearGradient id="g27" x1="0" x2="1" y1="0" y2="0"><stop offset="0" stop-color="rgb(196,196,219)"/><stop offset=".3" stop-color="rgb(173,173,206)"/><stop offset=".7" stop-color="rgb(153,153,181)"/><stop offset="1" stop-color="rgb(78,78,93)"/></linearGradient><linearGradient id="g28" x1="0" x2="1" y1="0" y2="0"><stop offset="0" stop-color="rgb(196,219,219)"/><stop offset=".3" stop-color="rgb(173,206,206)"/><stop offset=".7" stop-color="rgb(153,181,181)"/><stop offset="1" stop-color="rgb(78,93,93)"/></linearGradient><linearGradient id="g29" x1="0" x2="1" y1="0" y2="0"><stop offset="0" stop-color="rgb(219,196,219)"/><stop offset=".3" stop-color="rgb(206,173,206)"/><stop offset=".7" stop-color="rgb(181,153,181)"/><stop offset="1" stop-color="rgb(93,78,93)"/></linearGradient><linearGradient id="g30" x1="0" x2="1" y1="0" y2="0"><stop offset="0" stop-color="rgb(219,219,196)"/><stop offset=".3" stop-color="rgb(206,206,173)"/><stop offset=".7" stop-color="rgb(181,181,153)"/><stop offset="1" stop-color="rgb(93,93,78)"/></linearGradient><linearGradient id="g31" x1="0" x2="1" y1="0" y2="0"><stop offset="0" stop-color="rgb(251,251,251)"/><stop offset=".3" stop-color="rgb(250,250,250)"/><stop offset=".7" stop-color="rgb(220,220,220)"/><stop offset="1" stop-color="rgb(112,112,112)"/></linearGradient><linearGradient id="v1" x1="0" x2="0" y1="0" y2="1"><stop offset="0" stop-color="#d3e0de"/><stop offset="0.3" stop-color="#aac3c3"/><stop offset="0.55" stop-color="#a5bdbd"/><stop offset="1" stop-color="#485353"/></linearGradient><linearGradient id="v2" x1="0" x2="0" y1="0" y2="1"><stop offset="0" stop-color="#d3e0de"/><stop offset="0.3" stop-color="#aac3c3"/><stop offset="0.55" stop-color="#a5bdbd"/><stop offset="1" stop-color="#485353"/></linearGradient><linearGradient id="v3" x1="0" x2="0" y1="0" y2="1"><stop offset="0" stop-color="#d3e0de"/><stop offset="0.3" stop-color="#aac3c3"/><stop offset="0.55" stop-color="#a5bdbd"/><stop offset="1" stop-color="#485353"/></linearGradient><linearGradient id="v4" x1="0" x2="0" y1="0" y2="1"><stop offset="0" stop-color="#3a3aff"/><stop offset="0.25" stop-color="#0808ff"/><stop offset="0.6" stop-color="#0000e0"/><stop offset="1" stop-color="#000078"/></linearGradient></defs>
<text transform="translate(10.26,14.70) scale(1.0000,1)" font-size="5.20" fill="#fff" font-weight="bold">CM</text>
<text transform="translate(26.00,16.60) scale(0.8546,1)" font-size="11.48" fill="#000">CalMAN 2018 CalMAN Ultimate for Business 205 Days Remaining</text>
<line x1="1818.3" y1="13.5" x2="1827" y2="13.5" stroke="#111" stroke-width="1"/>
<rect x="1856.5" y="8.5" width="8.2" height="8.2" fill="none" stroke="#111" stroke-width="1"/>
<line x1="1895.3" y1="8.3" x2="1904" y2="17" stroke="#111" stroke-width="1.1"/>
<line x1="1904" y1="8.3" x2="1895.3" y2="17" stroke="#111" stroke-width="1.1"/>
<path d="M137.6 36.6h8.2l-4.1 4.4z" fill="#fff"/>
<text transform="translate(12.00,47.5) scale(0.9490,1)" font-size="26.79" font-weight="bold" letter-spacing="2.60" fill="#fff">CalMAN</text>
<path d="M9 62.5l6.5 5-6.5 5z" fill="#fff"/>
<line x1="85.5" y1="70.8" x2="91.5" y2="70.8" stroke="#777" stroke-width="1"/>
<line x1="88.5" y1="67.8" x2="88.5" y2="73.8" stroke="#777" stroke-width="1"/>
<text transform="translate(30.80,73.00) scale(0.9958,1)" font-size="10.03" fill="#dcdce4" stroke="#dcdce4" stroke-width="0.35">History 1</text>
<path d="M1540.4 66.5h8l-4 4.5z" fill="#fff"/>
<line x1="1560.5" y1="58" x2="1560.5" y2="80" stroke="#444" stroke-width="1"/>
<text transform="translate(1571.49,71.30) scale(1.0000,1)" font-size="7.80" fill="#fff" font-weight="bold">128</text>
<text transform="translate(1477.50,66.00) scale(0.9701,1)" font-size="9.16" fill="#eee" stroke="#eee" stroke-width="0.2">X-Rite i1Pro 2</text>
<text transform="translate(1477.50,77.60) scale(1.0247,1)" font-size="9.16" fill="#eee" stroke="#eee" stroke-width="0.2">Direct View</text>
<path d="M1688.5 66.5h8l-4 4.5z" fill="#fff"/>
<text transform="translate(1603.80,65.70) scale(1.0142,1)" font-size="9.16" fill="#eee" stroke="#eee" stroke-width="0.2">Mobile Forge</text>
<path d="M1814.8 66.5h8l-4 4.5z" fill="#fff"/>
<text transform="translate(1719.00,65.70) scale(1.0052,1)" font-size="9.16" fill="#eee" stroke="#eee" stroke-width="0.2">Direct Display Control</text>
<circle cx="1849.6" cy="68" r="3.6" fill="none" stroke="#ddd" stroke-width="1.6"/>
<circle cx="1849.6" cy="68" r="5.4" fill="none" stroke="#ddd" stroke-width="1.8" stroke-dasharray="2.1 2.14"/>
<text transform="translate(1876.38,72.50) scale(1.0000,1)" font-size="12.50" fill="#fff" font-weight="bold">?</text>
<path d="M1911.5 63v10l-4.5-5z" fill="#fff"/>
<text transform="translate(28.80,157.00) scale(0.8385,1)" font-size="52.91" fill="#f0f0f0" stroke="#f0f0f0" stroke-width="0.55">Saturation Sweeps</text>
<text transform="translate(163.90,220.80) scale(0.8692,1)" font-size="18.90" fill="#e2e2e2" stroke="#e2e2e2" stroke-width="0.3">DeltaE 2000</text>
<rect x="50.85" y="228" width="358.05" height="531" fill="#232323"/>
<line x1="97.4" y1="228" x2="97.4" y2="759" stroke="#8c8c8c" stroke-width="1.8"/>
<line x1="97.4" y1="759" x2="97.4" y2="765" stroke="#ddd" stroke-width="1.5"/>
<line x1="145.5" y1="228" x2="145.5" y2="759" stroke="#8c8c8c" stroke-width="1.8"/>
<line x1="145.5" y1="759" x2="145.5" y2="765" stroke="#ddd" stroke-width="1.5"/>
<line x1="193.3" y1="228" x2="193.3" y2="759" stroke="#8c8c8c" stroke-width="1.8"/>
<line x1="193.3" y1="759" x2="193.3" y2="765" stroke="#ddd" stroke-width="1.5"/>
<line x1="241.2" y1="228" x2="241.2" y2="759" stroke="#8c8c8c" stroke-width="1.8"/>
<line x1="241.2" y1="759" x2="241.2" y2="765" stroke="#ddd" stroke-width="1.5"/>
<line x1="289.6" y1="228" x2="289.6" y2="759" stroke="#8c8c8c" stroke-width="1.8"/>
<line x1="289.6" y1="759" x2="289.6" y2="765" stroke="#ddd" stroke-width="1.5"/>
<line x1="337" y1="228" x2="337" y2="759" stroke="#8c8c8c" stroke-width="1.8"/>
<line x1="337" y1="759" x2="337" y2="765" stroke="#ddd" stroke-width="1.5"/>
<line x1="384.4" y1="228" x2="384.4" y2="759" stroke="#8c8c8c" stroke-width="1.8"/>
<line x1="384.4" y1="759" x2="384.4" y2="765" stroke="#ddd" stroke-width="1.5"/>
<line x1="50.85" y1="759" x2="50.85" y2="765" stroke="#ddd" stroke-width="1.5"/>
<rect x="50.85" y="235.7" width="37.95" height="10" fill="#000"/>
<rect x="51.65" y="237" width="35.95" height="6.7" fill="url(#g1)"/>
<rect x="50.85" y="246.35" width="7.15" height="10" fill="#000"/>
<rect x="51.65" y="247.65" width="5.15" height="6.7" fill="url(#g2)"/>
<rect x="50.85" y="257" width="67.25" height="10" fill="#000"/>
<rect x="51.65" y="258.3" width="65.25" height="6.7" fill="url(#g3)"/>
<rect x="50.85" y="267.65" width="124.05" height="10" fill="#000"/>
<rect x="51.65" y="268.95" width="122.05" height="6.7" fill="url(#g4)"/>
<rect x="50.85" y="278.3" width="69.55" height="10" fill="#000"/>
<rect x="51.65" y="279.6" width="67.55" height="6.7" fill="url(#g5)"/>
<rect x="50.85" y="288.95" width="51.15" height="10" fill="#000"/>
<rect x="51.65" y="290.25" width="49.15" height="6.7" fill="url(#g6)"/>
<rect x="50.85" y="324.2" width="35.65" height="10" fill="#000"/>
<rect x="51.65" y="325.5" width="33.65" height="6.7" fill="url(#g7)"/>
<rect x="50.85" y="334.85" width="57.55" height="10" fill="#000"/>
<rect x="51.65" y="336.15" width="55.55" height="6.7" fill="url(#g8)"/>
<rect x="50.85" y="345.5" width="81.55" height="10" fill="#000"/>
<rect x="51.65" y="346.8" width="79.55" height="6.7" fill="url(#g9)"/>
<rect x="50.85" y="356.15" width="122.15" height="10" fill="#000"/>
<rect x="51.65" y="357.45" width="120.15" height="6.7" fill="url(#g10)"/>
<rect x="50.85" y="366.8" width="84.25" height="10" fill="#000"/>
<rect x="51.65" y="368.1" width="82.25" height="6.7" fill="url(#g11)"/>
<rect x="50.85" y="377.45" width="55.45" height="10" fill="#000"/>
<rect x="51.65" y="378.75" width="53.45" height="6.7" fill="url(#g12)"/>
<rect x="50.85" y="412.7" width="51.15" height="10" fill="#000"/>
<rect x="51.65" y="414" width="49.15" height="6.7" fill="url(#g13)"/>
<rect x="50.85" y="423.35" width="34.95" height="10" fill="#000"/>
<rect x="51.65" y="424.65" width="32.95" height="6.7" fill="url(#g14)"/>
<rect x="50.85" y="434" width="75.95" height="10" fill="#000"/>
<rect x="51.65" y="435.3" width="73.95" height="6.7" fill="url(#g15)"/>
<rect x="50.85" y="444.65" width="134.65" height="10" fill="#000"/>
<rect x="51.65" y="445.95" width="132.65" height="6.7" fill="url(#g16)"/>
<rect x="50.85" y="455.3" width="96.15" height="10" fill="#000"/>
<rect x="51.65" y="456.6" width="94.15" height="6.7" fill="url(#g17)"/>
<rect x="50.85" y="465.95" width="51.15" height="10" fill="#000"/>
<rect x="51.65" y="467.25" width="49.15" height="6.7" fill="url(#g18)"/>
<rect x="50.85" y="501.2" width="79.45" height="10" fill="#000"/>
<rect x="51.65" y="502.5" width="77.45" height="6.7" fill="url(#g19)"/>
<rect x="50.85" y="511.85" width="27.15" height="10" fill="#000"/>
<rect x="51.65" y="513.15" width="25.15" height="6.7" fill="url(#g20)"/>
<rect x="50.85" y="522.5" width="77.45" height="10" fill="#000"/>
<rect x="51.65" y="523.8" width="75.45" height="6.7" fill="url(#g21)"/>
<rect x="50.85" y="533.15" width="149.85" height="10" fill="#000"/>
<rect x="51.65" y="534.45" width="147.85" height="6.7" fill="url(#g22)"/>
<rect x="50.85" y="543.8" width="115.35" height="10" fill="#000"/>
<rect x="51.65" y="545.1" width="113.35" height="6.7" fill="url(#g23)"/>
<rect x="50.85" y="554.45" width="69.15" height="10" fill="#000"/>
<rect x="51.65" y="555.75" width="67.15" height="6.7" fill="url(#g24)"/>
<rect x="50.85" y="589.7" width="121.65" height="10" fill="#000"/>
<rect x="51.65" y="591" width="119.65" height="6.7" fill="url(#g25)"/>
<rect x="50.85" y="600.35" width="71.45" height="10" fill="#000"/>
<rect x="51.65" y="601.65" width="69.45" height="6.7" fill="url(#g26)"/>
<rect x="50.85" y="611" width="107.35" height="10" fill="#000"/>
<rect x="51.65" y="612.3" width="105.35" height="6.7" fill="url(#g27)"/>
<rect x="50.85" y="621.65" width="168.45" height="10" fill="#000"/>
<rect x="51.65" y="622.95" width="166.45" height="6.7" fill="url(#g28)"/>
<rect x="50.85" y="632.3" width="132.65" height="10" fill="#000"/>
<rect x="51.65" y="633.6" width="130.65" height="6.7" fill="url(#g29)"/>
<rect x="50.85" y="642.95" width="109.15" height="10" fill="#000"/>
<rect x="51.65" y="644.25" width="107.15" height="6.7" fill="url(#g30)"/>
<rect x="50.85" y="742.1" width="170.05" height="10" fill="#000"/>
<rect x="51.65" y="743.4" width="168.05" height="6.7" fill="url(#g31)"/>
<line x1="50.85" y1="228" x2="408.9" y2="228" stroke="#a8a8a8" stroke-width="1.8"/>
<line x1="408.9" y1="228" x2="408.9" y2="759" stroke="#a8a8a8" stroke-width="1.8"/>
<line x1="50.85" y1="227.3" x2="50.85" y2="759.7" stroke="#a8a8a8" stroke-width="1.8"/>
<line x1="50.85" y1="759" x2="408.9" y2="759" stroke="#a8a8a8" stroke-width="1.8"/>
<line x1="44" y1="228" x2="50.85" y2="228" stroke="#ddd" stroke-width="1.5"/>
<line x1="44" y1="316.5" x2="50.85" y2="316.5" stroke="#ddd" stroke-width="1.5"/>
<line x1="44" y1="405" x2="50.85" y2="405" stroke="#ddd" stroke-width="1.5"/>
<line x1="44" y1="493.5" x2="50.85" y2="493.5" stroke="#ddd" stroke-width="1.5"/>
<line x1="44" y1="582" x2="50.85" y2="582" stroke="#ddd" stroke-width="1.5"/>
<line x1="44" y1="670.5" x2="50.85" y2="670.5" stroke="#ddd" stroke-width="1.5"/>
<line x1="44" y1="759" x2="50.85" y2="759" stroke="#ddd" stroke-width="1.5"/>
<line x1="74.1" y1="228" x2="74.1" y2="759" stroke="#0a8a0a" stroke-width="2"/>
<line x1="122.1" y1="228" x2="122.1" y2="759" stroke="#ff0" stroke-width="2"/>
<line x1="289.7" y1="228" x2="289.7" y2="759" stroke="#e01010" stroke-width="2.2"/>
<text transform="translate(8.80,280.20) scale(0.8714,1)" font-size="18.17" fill="#e2e2e2" stroke="#e2e2e2" stroke-width="0.3">100%</text>
<text transform="translate(17.62,368.70) scale(0.8714,1)" font-size="18.17" fill="#e2e2e2" stroke="#e2e2e2" stroke-width="0.3">80%</text>
<text transform="translate(17.62,457.20) scale(0.8714,1)" font-size="18.17" fill="#e2e2e2" stroke="#e2e2e2" stroke-width="0.3">60%</text>
<text transform="translate(17.62,545.70) scale(0.8714,1)" font-size="18.17" fill="#e2e2e2" stroke="#e2e2e2" stroke-width="0.3">40%</text>
<text transform="translate(17.62,634.20) scale(0.8714,1)" font-size="18.17" fill="#e2e2e2" stroke="#e2e2e2" stroke-width="0.3">20%</text>
<text transform="translate(22.89,722.70) scale(0.8714,1)" font-size="18.17" fill="#e2e2e2" stroke="#e2e2e2" stroke-width="0.3">100</text>
<text transform="translate(46.45,787.20) scale(0.8714,1)" font-size="18.17" fill="#e2e2e2" stroke="#e2e2e2" stroke-width="0.3">0</text>
<text transform="translate(93.00,787.20) scale(0.8714,1)" font-size="18.17" fill="#e2e2e2" stroke="#e2e2e2" stroke-width="0.3">2</text>
<text transform="translate(141.10,787.20) scale(0.8714,1)" font-size="18.17" fill="#e2e2e2" stroke="#e2e2e2" stroke-width="0.3">4</text>
<text transform="translate(188.90,787.20) scale(0.8714,1)" font-size="18.17" fill="#e2e2e2" stroke="#e2e2e2" stroke-width="0.3">6</text>
<text transform="translate(236.80,787.20) scale(0.8714,1)" font-size="18.17" fill="#e2e2e2" stroke="#e2e2e2" stroke-width="0.3">8</text>
<text transform="translate(280.80,787.20) scale(0.8714,1)" font-size="18.17" fill="#e2e2e2" stroke="#e2e2e2" stroke-width="0.3">10</text>
<text transform="translate(328.20,787.20) scale(0.8714,1)" font-size="18.17" fill="#e2e2e2" stroke="#e2e2e2" stroke-width="0.3">12</text>
<text transform="translate(375.60,787.20) scale(0.8714,1)" font-size="18.17" fill="#e2e2e2" stroke="#e2e2e2" stroke-width="0.3">14</text>
<rect x="469.6" y="141.8" width="166.4" height="405.9" fill="#232323"/>
<line x1="463.6" y1="547.7" x2="469.6" y2="547.7" stroke="#ddd" stroke-width="1.5"/>
<text transform="translate(440.51,555.50) scale(0.7968,1)" font-size="19.19" fill="#e2e2e2" stroke="#e2e2e2" stroke-width="0.3">-15</text>
<line x1="469.6" y1="480.05" x2="636" y2="480.05" stroke="#8c8c8c" stroke-width="1.8"/>
<line x1="463.6" y1="480.05" x2="469.6" y2="480.05" stroke="#ddd" stroke-width="1.5"/>
<text transform="translate(440.51,487.85) scale(0.7968,1)" font-size="19.19" fill="#e2e2e2" stroke="#e2e2e2" stroke-width="0.3">-10</text>
<line x1="469.6" y1="412.4" x2="636" y2="412.4" stroke="#8c8c8c" stroke-width="1.8"/>
<line x1="463.6" y1="412.4" x2="469.6" y2="412.4" stroke="#ddd" stroke-width="1.5"/>
<text transform="translate(449.01,420.20) scale(0.7968,1)" font-size="19.19" fill="#e2e2e2" stroke="#e2e2e2" stroke-width="0.3">-5</text>
<line x1="469.6" y1="344.75" x2="636" y2="344.75" stroke="#8c8c8c" stroke-width="1.8"/>
<line x1="463.6" y1="344.75" x2="469.6" y2="344.75" stroke="#ddd" stroke-width="1.5"/>
<text transform="translate(454.10,352.55) scale(0.7968,1)" font-size="19.19" fill="#e2e2e2" stroke="#e2e2e2" stroke-width="0.3">0</text>
<line x1="469.6" y1="277.1" x2="636" y2="277.1" stroke="#8c8c8c" stroke-width="1.8"/>
<line x1="463.6" y1="277.1" x2="469.6" y2="277.1" stroke="#ddd" stroke-width="1.5"/>
<text transform="translate(454.10,284.90) scale(0.7968,1)" font-size="19.19" fill="#e2e2e2" stroke="#e2e2e2" stroke-width="0.3">5</text>
<line x1="469.6" y1="209.45" x2="636" y2="209.45" stroke="#8c8c8c" stroke-width="1.8"/>
<line x1="463.6" y1="209.45" x2="469.6" y2="209.45" stroke="#ddd" stroke-width="1.5"/>
<text transform="translate(445.60,217.25) scale(0.7968,1)" font-size="19.19" fill="#e2e2e2" stroke="#e2e2e2" stroke-width="0.3">10</text>
<line x1="463.6" y1="141.8" x2="469.6" y2="141.8" stroke="#ddd" stroke-width="1.5"/>
<text transform="translate(445.60,149.60) scale(0.7968,1)" font-size="19.19" fill="#e2e2e2" stroke="#e2e2e2" stroke-width="0.3">15</text>
<line x1="469.6" y1="141.8" x2="636" y2="141.8" stroke="#a8a8a8" stroke-width="1.8"/>
<line x1="636" y1="141.8" x2="636" y2="547.7" stroke="#a8a8a8" stroke-width="1.8"/>
<line x1="469.6" y1="141.1" x2="469.6" y2="555.7" stroke="#a8a8a8" stroke-width="1.8"/>
<line x1="469.6" y1="547.7" x2="636" y2="547.7" stroke="#a8a8a8" stroke-width="1.8"/>
<line x1="636" y1="547.7" x2="636" y2="555.7" stroke="#a8a8a8" stroke-width="1.8"/>
<rect x="486" y="339.2" width="133.8" height="6.55" fill="#000"/>
<rect x="487.5" y="340.7" width="130.8" height="3.55" fill="url(#v1)"/>
<text transform="translate(514.20,134.30) scale(0.8312,1)" font-size="19.77" fill="#e2e2e2" stroke="#e2e2e2" stroke-width="0.3">DeltaL</text>
<text transform="translate(537.50,569.00) scale(0.7968,1)" font-size="19.19" fill="#e2e2e2" stroke="#e2e2e2" stroke-width="0.3">20%</text>
<rect x="696.9" y="141.8" width="165.7" height="405.9" fill="#232323"/>
<line x1="690.9" y1="547.7" x2="696.9" y2="547.7" stroke="#ddd" stroke-width="1.5"/>
<text transform="translate(667.81,555.50) scale(0.7968,1)" font-size="19.19" fill="#e2e2e2" stroke="#e2e2e2" stroke-width="0.3">-15</text>
<line x1="696.9" y1="480.05" x2="862.6" y2="480.05" stroke="#8c8c8c" stroke-width="1.8"/>
<line x1="690.9" y1="480.05" x2="696.9" y2="480.05" stroke="#ddd" stroke-width="1.5"/>
<text transform="translate(667.81,487.85) scale(0.7968,1)" font-size="19.19" fill="#e2e2e2" stroke="#e2e2e2" stroke-width="0.3">-10</text>
<line x1="696.9" y1="412.4" x2="862.6" y2="412.4" stroke="#8c8c8c" stroke-width="1.8"/>
<line x1="690.9" y1="412.4" x2="696.9" y2="412.4" stroke="#ddd" stroke-width="1.5"/>
<text transform="translate(676.31,420.20) scale(0.7968,1)" font-size="19.19" fill="#e2e2e2" stroke="#e2e2e2" stroke-width="0.3">-5</text>
<line x1="696.9" y1="344.75" x2="862.6" y2="344.75" stroke="#8c8c8c" stroke-width="1.8"/>
<line x1="690.9" y1="344.75" x2="696.9" y2="344.75" stroke="#ddd" stroke-width="1.5"/>
<text transform="translate(681.40,352.55) scale(0.7968,1)" font-size="19.19" fill="#e2e2e2" stroke="#e2e2e2" stroke-width="0.3">0</text>
<line x1="696.9" y1="277.1" x2="862.6" y2="277.1" stroke="#8c8c8c" stroke-width="1.8"/>
<line x1="690.9" y1="277.1" x2="696.9" y2="277.1" stroke="#ddd" stroke-width="1.5"/>
<text transform="translate(681.40,284.90) scale(0.7968,1)" font-size="19.19" fill="#e2e2e2" stroke="#e2e2e2" stroke-width="0.3">5</text>
<line x1="696.9" y1="209.45" x2="862.6" y2="209.45" stroke="#8c8c8c" stroke-width="1.8"/>
<line x1="690.9" y1="209.45" x2="696.9" y2="209.45" stroke="#ddd" stroke-width="1.5"/>
<text transform="translate(672.90,217.25) scale(0.7968,1)" font-size="19.19" fill="#e2e2e2" stroke="#e2e2e2" stroke-width="0.3">10</text>
<line x1="690.9" y1="141.8" x2="696.9" y2="141.8" stroke="#ddd" stroke-width="1.5"/>
<text transform="translate(672.90,149.60) scale(0.7968,1)" font-size="19.19" fill="#e2e2e2" stroke="#e2e2e2" stroke-width="0.3">15</text>
<line x1="696.9" y1="141.8" x2="862.6" y2="141.8" stroke="#a8a8a8" stroke-width="1.8"/>
<line x1="862.6" y1="141.8" x2="862.6" y2="547.7" stroke="#a8a8a8" stroke-width="1.8"/>
<line x1="696.9" y1="141.1" x2="696.9" y2="555.7" stroke="#a8a8a8" stroke-width="1.8"/>
<line x1="696.9" y1="547.7" x2="862.6" y2="547.7" stroke="#a8a8a8" stroke-width="1.8"/>
<line x1="862.6" y1="547.7" x2="862.6" y2="555.7" stroke="#a8a8a8" stroke-width="1.8"/>
<rect x="713.2" y="312.7" width="133.4" height="33.05" fill="#000"/>
<rect x="714.7" y="314.2" width="130.4" height="30.05" fill="url(#v2)"/>
<text transform="translate(740.20,134.30) scale(0.8208,1)" font-size="19.77" fill="#e2e2e2" stroke="#e2e2e2" stroke-width="0.3">DeltaC</text>
<text transform="translate(764.45,569.00) scale(0.7968,1)" font-size="19.19" fill="#e2e2e2" stroke="#e2e2e2" stroke-width="0.3">20%</text>
<rect x="923.3" y="141.8" width="166.5" height="405.9" fill="#232323"/>
<line x1="917.3" y1="547.7" x2="923.3" y2="547.7" stroke="#ddd" stroke-width="1.5"/>
<text transform="translate(894.21,555.50) scale(0.7968,1)" font-size="19.19" fill="#e2e2e2" stroke="#e2e2e2" stroke-width="0.3">-15</text>
<line x1="923.3" y1="480.05" x2="1089.8" y2="480.05" stroke="#8c8c8c" stroke-width="1.8"/>
<line x1="917.3" y1="480.05" x2="923.3" y2="480.05" stroke="#ddd" stroke-width="1.5"/>
<text transform="translate(894.21,487.85) scale(0.7968,1)" font-size="19.19" fill="#e2e2e2" stroke="#e2e2e2" stroke-width="0.3">-10</text>
<line x1="923.3" y1="412.4" x2="1089.8" y2="412.4" stroke="#8c8c8c" stroke-width="1.8"/>
<line x1="917.3" y1="412.4" x2="923.3" y2="412.4" stroke="#ddd" stroke-width="1.5"/>
<text transform="translate(902.71,420.20) scale(0.7968,1)" font-size="19.19" fill="#e2e2e2" stroke="#e2e2e2" stroke-width="0.3">-5</text>
<line x1="923.3" y1="344.75" x2="1089.8" y2="344.75" stroke="#8c8c8c" stroke-width="1.8"/>
<line x1="917.3" y1="344.75" x2="923.3" y2="344.75" stroke="#ddd" stroke-width="1.5"/>
<text transform="translate(907.80,352.55) scale(0.7968,1)" font-size="19.19" fill="#e2e2e2" stroke="#e2e2e2" stroke-width="0.3">0</text>
<line x1="923.3" y1="277.1" x2="1089.8" y2="277.1" stroke="#8c8c8c" stroke-width="1.8"/>
<line x1="917.3" y1="277.1" x2="923.3" y2="277.1" stroke="#ddd" stroke-width="1.5"/>
<text transform="translate(907.80,284.90) scale(0.7968,1)" font-size="19.19" fill="#e2e2e2" stroke="#e2e2e2" stroke-width="0.3">5</text>
<line x1="923.3" y1="209.45" x2="1089.8" y2="209.45" stroke="#8c8c8c" stroke-width="1.8"/>
<line x1="917.3" y1="209.45" x2="923.3" y2="209.45" stroke="#ddd" stroke-width="1.5"/>
<text transform="translate(899.30,217.25) scale(0.7968,1)" font-size="19.19" fill="#e2e2e2" stroke="#e2e2e2" stroke-width="0.3">10</text>
<line x1="917.3" y1="141.8" x2="923.3" y2="141.8" stroke="#ddd" stroke-width="1.5"/>
<text transform="translate(899.30,149.60) scale(0.7968,1)" font-size="19.19" fill="#e2e2e2" stroke="#e2e2e2" stroke-width="0.3">15</text>
<line x1="923.3" y1="141.8" x2="1089.8" y2="141.8" stroke="#a8a8a8" stroke-width="1.8"/>
<line x1="1089.8" y1="141.8" x2="1089.8" y2="547.7" stroke="#a8a8a8" stroke-width="1.8"/>
<line x1="923.3" y1="141.1" x2="923.3" y2="555.7" stroke="#a8a8a8" stroke-width="1.8"/>
<line x1="923.3" y1="547.7" x2="1089.8" y2="547.7" stroke="#a8a8a8" stroke-width="1.8"/>
<line x1="1089.8" y1="547.7" x2="1089.8" y2="555.7" stroke="#a8a8a8" stroke-width="1.8"/>
<rect x="939.7" y="234.2" width="134.2" height="111.55" fill="#000"/>
<rect x="941.2" y="235.7" width="131.2" height="108.55" fill="url(#v3)"/>
<text transform="translate(966.30,134.30) scale(0.8390,1)" font-size="19.77" fill="#e2e2e2" stroke="#e2e2e2" stroke-width="0.3">DeltaH</text>
<text transform="translate(991.25,569.00) scale(0.7968,1)" font-size="19.19" fill="#e2e2e2" stroke="#e2e2e2" stroke-width="0.3">20%</text>
<text transform="translate(499.80,789.60) scale(0.8189,1)" font-size="15.99" fill="#fff" stroke="#fff" stroke-width="0.35">20%</text>
<text transform="translate(632.85,789.60) scale(0.8189,1)" font-size="15.99" fill="#fff" stroke="#fff" stroke-width="0.35">40%</text>
<text transform="translate(765.90,789.60) scale(0.8189,1)" font-size="15.99" fill="#fff" stroke="#fff" stroke-width="0.35">60%</text>
<text transform="translate(898.95,789.60) scale(0.8189,1)" font-size="15.99" fill="#fff" stroke="#fff" stroke-width="0.35">80%</text>
<text transform="translate(1028.35,789.60) scale(0.8189,1)" font-size="15.99" fill="#fff" stroke="#fff" stroke-width="0.35">100%</text>
<text transform="translate(448.2,658.4) rotate(-90) scale(1.0439,1)" font-size="15.10" fill="#fff" stroke="#fff" stroke-width="0.3">Actual</text>
<text transform="translate(448.2,754.3) rotate(-90) scale(1.0439,1)" font-size="15.10" fill="#fff" stroke="#fff" stroke-width="0.3">Target</text>
<text transform="translate(1476.20,132.20) scale(0.8056,1)" font-size="19.62" fill="#e2e2e2" stroke="#e2e2e2" stroke-width="0.3">CIE 1931 xy</text>
<line x1="1162" y1="772" x2="1162" y2="779.5" stroke="#ddd" stroke-width="1.6"/>
<text transform="translate(1156.94,799.80) scale(0.8817,1)" font-size="18.60" fill="#e2e2e2" stroke="#e2e2e2" stroke-width="0.3">0</text>
<line x1="1155.5" y1="771.9" x2="1161.5" y2="771.9" stroke="#ddd" stroke-width="1.6"/>
<text transform="translate(1145.48,781.48) scale(0.8817,1)" font-size="18.60" fill="#e2e2e2" stroke="#e2e2e2" stroke-width="0.3">0</text>
<line x1="1250.54" y1="772" x2="1250.54" y2="779.5" stroke="#ddd" stroke-width="1.6"/>
<text transform="translate(1238.64,799.80) scale(0.8817,1)" font-size="18.60" fill="#e2e2e2" stroke="#e2e2e2" stroke-width="0.3">0,1</text>
<line x1="1155.5" y1="696.69" x2="1161.5" y2="696.69" stroke="#ddd" stroke-width="1.6"/>
<text transform="translate(1131.80,705.92) scale(0.8817,1)" font-size="18.60" fill="#e2e2e2" stroke="#e2e2e2" stroke-width="0.3">0,1</text>
<line x1="1339.08" y1="772" x2="1339.08" y2="779.5" stroke="#ddd" stroke-width="1.6"/>
<text transform="translate(1327.18,799.80) scale(0.8817,1)" font-size="18.60" fill="#e2e2e2" stroke="#e2e2e2" stroke-width="0.3">0,2</text>
<line x1="1155.5" y1="621.48" x2="1161.5" y2="621.48" stroke="#ddd" stroke-width="1.6"/>
<text transform="translate(1131.80,630.36) scale(0.8817,1)" font-size="18.60" fill="#e2e2e2" stroke="#e2e2e2" stroke-width="0.3">0,2</text>
<line x1="1427.62" y1="772" x2="1427.62" y2="779.5" stroke="#ddd" stroke-width="1.6"/>
<text transform="translate(1415.72,799.80) scale(0.8817,1)" font-size="18.60" fill="#e2e2e2" stroke="#e2e2e2" stroke-width="0.3">0,3</text>
<line x1="1155.5" y1="546.27" x2="1161.5" y2="546.27" stroke="#ddd" stroke-width="1.6"/>
<text transform="translate(1131.80,554.80) scale(0.8817,1)" font-size="18.60" fill="#e2e2e2" stroke="#e2e2e2" stroke-width="0.3">0,3</text>
<line x1="1516.16" y1="772" x2="1516.16" y2="779.5" stroke="#ddd" stroke-width="1.6"/>
<text transform="translate(1504.26,799.80) scale(0.8817,1)" font-size="18.60" fill="#e2e2e2" stroke="#e2e2e2" stroke-width="0.3">0,4</text>
<line x1="1155.5" y1="471.06" x2="1161.5" y2="471.06" stroke="#ddd" stroke-width="1.6"/>
<text transform="translate(1131.80,479.24) scale(0.8817,1)" font-size="18.60" fill="#e2e2e2" stroke="#e2e2e2" stroke-width="0.3">0,4</text>
<line x1="1604.7" y1="772" x2="1604.7" y2="779.5" stroke="#ddd" stroke-width="1.6"/>
<text transform="translate(1592.80,799.80) scale(0.8817,1)" font-size="18.60" fill="#e2e2e2" stroke="#e2e2e2" stroke-width="0.3">0,5</text>
<line x1="1155.5" y1="395.85" x2="1161.5" y2="395.85" stroke="#ddd" stroke-width="1.6"/>
<text transform="translate(1131.80,403.68) scale(0.8817,1)" font-size="18.60" fill="#e2e2e2" stroke="#e2e2e2" stroke-width="0.3">0,5</text>
<line x1="1693.24" y1="772" x2="1693.24" y2="779.5" stroke="#ddd" stroke-width="1.6"/>
<text transform="translate(1681.34,799.80) scale(0.8817,1)" font-size="18.60" fill="#e2e2e2" stroke="#e2e2e2" stroke-width="0.3">0,6</text>
<line x1="1155.5" y1="320.64" x2="1161.5" y2="320.64" stroke="#ddd" stroke-width="1.6"/>
<text transform="translate(1131.80,328.12) scale(0.8817,1)" font-size="18.60" fill="#e2e2e2" stroke="#e2e2e2" stroke-width="0.3">0,6</text>
<line x1="1781.78" y1="772" x2="1781.78" y2="779.5" stroke="#ddd" stroke-width="1.6"/>
<text transform="translate(1769.88,799.80) scale(0.8817,1)" font-size="18.60" fill="#e2e2e2" stroke="#e2e2e2" stroke-width="0.3">0,7</text>
<line x1="1155.5" y1="245.43" x2="1161.5" y2="245.43" stroke="#ddd" stroke-width="1.6"/>
<text transform="translate(1131.80,252.56) scale(0.8817,1)" font-size="18.60" fill="#e2e2e2" stroke="#e2e2e2" stroke-width="0.3">0,7</text>
<line x1="1870.32" y1="772" x2="1870.32" y2="779.5" stroke="#ddd" stroke-width="1.6"/>
<text transform="translate(1858.42,799.80) scale(0.8817,1)" font-size="18.60" fill="#e2e2e2" stroke="#e2e2e2" stroke-width="0.3">0,8</text>
<line x1="1155.5" y1="170.22" x2="1161.5" y2="170.22" stroke="#ddd" stroke-width="1.6"/>
<text transform="translate(1131.80,177.00) scale(0.8817,1)" font-size="18.60" fill="#e2e2e2" stroke="#e2e2e2" stroke-width="0.3">0,8</text>
<rect x="1421.35" y="459.15" width="16.3" height="16.3" fill="none" stroke="#fff" stroke-width="1.65"/>
<rect x="1413.25" y="405.25" width="16.3" height="16.3" fill="none" stroke="#fff" stroke-width="1.65"/>
<rect x="1405.65" y="352.75" width="16.3" height="16.3" fill="none" stroke="#fff" stroke-width="1.65"/>
<rect x="1396.35" y="302.15" width="16.3" height="16.3" fill="none" stroke="#fff" stroke-width="1.65"/>
<rect x="1388.75" y="242.15" width="16.3" height="16.3" fill="none" stroke="#fff" stroke-width="1.65"/>
<rect x="1452.85" y="481.95" width="16.3" height="16.3" fill="none" stroke="#fff" stroke-width="1.65"/>
<rect x="1474.45" y="451.15" width="16.3" height="16.3" fill="none" stroke="#fff" stroke-width="1.65"/>
<rect x="1494.75" y="422.75" width="16.3" height="16.3" fill="none" stroke="#fff" stroke-width="1.65"/>
<rect x="1518.65" y="391.15" width="16.3" height="16.3" fill="none" stroke="#fff" stroke-width="1.65"/>
<rect x="1541.95" y="357.85" width="16.3" height="16.3" fill="none" stroke="#fff" stroke-width="1.65"/>
<rect x="1494.75" y="515.25" width="16.3" height="16.3" fill="none" stroke="#fff" stroke-width="1.65"/>
<rect x="1556.15" y="517.65" width="16.3" height="16.3" fill="none" stroke="#fff" stroke-width="1.65"/>
<rect x="1623.35" y="519.05" width="16.3" height="16.3" fill="none" stroke="#fff" stroke-width="1.65"/>
<rect x="1682.45" y="520.75" width="16.3" height="16.3" fill="none" stroke="#fff" stroke-width="1.65"/>
<rect x="1755.85" y="520.75" width="16.3" height="16.3" fill="none" stroke="#fff" stroke-width="1.65"/>
<rect x="1433.95" y="541.75" width="16.3" height="16.3" fill="none" stroke="#fff" stroke-width="1.65"/>
<rect x="1438.55" y="567.75" width="16.3" height="16.3" fill="none" stroke="#fff" stroke-width="1.65"/>
<rect x="1443.25" y="593.95" width="16.3" height="16.3" fill="none" stroke="#fff" stroke-width="1.65"/>
<rect x="1446.65" y="620.25" width="16.3" height="16.3" fill="none" stroke="#fff" stroke-width="1.65"/>
<rect x="1450.75" y="648.65" width="16.3" height="16.3" fill="none" stroke="#fff" stroke-width="1.65"/>
<rect x="1400.75" y="553.85" width="16.3" height="16.3" fill="none" stroke="#fff" stroke-width="1.65"/>
<rect x="1372.85" y="596.25" width="16.3" height="16.3" fill="none" stroke="#fff" stroke-width="1.65"/>
<rect x="1344.85" y="634.65" width="16.3" height="16.3" fill="none" stroke="#fff" stroke-width="1.65"/>
<rect x="1316.65" y="674.75" width="16.3" height="16.3" fill="none" stroke="#fff" stroke-width="1.65"/>
<rect x="1285.05" y="716.55" width="16.3" height="16.3" fill="none" stroke="#fff" stroke-width="1.65"/>
<rect x="1410.85" y="513.05" width="16.3" height="16.3" fill="none" stroke="#fff" stroke-width="1.65"/>
<rect x="1390.25" y="513.05" width="16.3" height="16.3" fill="none" stroke="#fff" stroke-width="1.65"/>
<rect x="1369.35" y="513.05" width="16.3" height="16.3" fill="none" stroke="#fff" stroke-width="1.65"/>
<rect x="1351.15" y="512.85" width="16.3" height="16.3" fill="none" stroke="#fff" stroke-width="1.65"/>
<rect x="1330.25" y="512.25" width="16.3" height="16.3" fill="none" stroke="#fff" stroke-width="1.65"/>
<rect x="1430.55" y="515.15" width="16.3" height="16.3" fill="none" stroke="#000" stroke-width="2"/>
<ellipse cx="1421.6" cy="479.5" rx="4.5" ry="5.4" fill="rgb(159,183,159)" stroke="#000" stroke-width="1.35"/>
<ellipse cx="1415.2" cy="411.8" rx="4.5" ry="5.4" fill="rgb(137,183,137)" stroke="#000" stroke-width="1.35"/>
<ellipse cx="1407.9" cy="343.2" rx="4.5" ry="5.4" fill="rgb(111,183,111)" stroke="#000" stroke-width="1.35"/>
<ellipse cx="1401.1" cy="278.6" rx="4.5" ry="5.4" fill="rgb(79,183,79)" stroke="#000" stroke-width="1.35"/>
<ellipse cx="1396.9" cy="254.1" rx="4.5" ry="5.4" fill="rgb(10,183,10)" stroke="#000" stroke-width="1.35"/>
<ellipse cx="1448.4" cy="502.7" rx="4.5" ry="5.4" fill="rgb(183,183,157)" stroke="#000" stroke-width="1.35"/>
<ellipse cx="1470.3" cy="468.9" rx="4.5" ry="5.4" fill="rgb(183,183,131)" stroke="#000" stroke-width="1.35"/>
<ellipse cx="1496.5" cy="427.5" rx="4.5" ry="5.4" fill="rgb(183,183,102)" stroke="#000" stroke-width="1.35"/>
<ellipse cx="1524.8" cy="385.4" rx="4.5" ry="5.4" fill="rgb(183,183,67)" stroke="#000" stroke-width="1.35"/>
<ellipse cx="1540.8" cy="362.6" rx="4.5" ry="5.4" fill="rgb(183,183,12)" stroke="#000" stroke-width="1.35"/>
<ellipse cx="1478.3" cy="532.2" rx="4.5" ry="5.4" fill="rgb(195,154,154)" stroke="#000" stroke-width="1.35"/>
<ellipse cx="1544.2" cy="530.4" rx="4.5" ry="5.4" fill="rgb(195,123,123)" stroke="#000" stroke-width="1.35"/>
<ellipse cx="1621.8" cy="528.9" rx="4.5" ry="5.4" fill="rgb(195,91,91)" stroke="#000" stroke-width="1.35"/>
<ellipse cx="1689.3" cy="530.2" rx="4.5" ry="5.4" fill="rgb(195,56,56)" stroke="#000" stroke-width="1.35"/>
<ellipse cx="1754.7" cy="528.9" rx="4.5" ry="5.4" fill="rgb(195,12,12)" stroke="#000" stroke-width="1.35"/>
<ellipse cx="1424.7" cy="561.8" rx="4.5" ry="5.4" fill="rgb(195,154,195)" stroke="#000" stroke-width="1.35"/>
<ellipse cx="1426.5" cy="589.8" rx="4.5" ry="5.4" fill="rgb(195,123,195)" stroke="#000" stroke-width="1.35"/>
<ellipse cx="1429.5" cy="618" rx="4.5" ry="5.4" fill="rgb(195,91,195)" stroke="#000" stroke-width="1.35"/>
<ellipse cx="1431.9" cy="644.1" rx="4.5" ry="5.4" fill="rgb(195,56,195)" stroke="#000" stroke-width="1.35"/>
<ellipse cx="1435.3" cy="669" rx="4.5" ry="5.4" fill="rgb(195,12,195)" stroke="#000" stroke-width="1.35"/>
<ellipse cx="1396.5" cy="579.3" rx="4.5" ry="5.4" fill="rgb(154,154,195)" stroke="#000" stroke-width="1.35"/>
<ellipse cx="1368.7" cy="621.7" rx="4.5" ry="5.4" fill="rgb(123,123,195)" stroke="#000" stroke-width="1.35"/>
<ellipse cx="1341.6" cy="661.8" rx="4.5" ry="5.4" fill="rgb(91,91,195)" stroke="#000" stroke-width="1.35"/>
<ellipse cx="1318.4" cy="696.8" rx="4.5" ry="5.4" fill="rgb(56,56,195)" stroke="#000" stroke-width="1.35"/>
<ellipse cx="1296.5" cy="730.2" rx="4.5" ry="5.4" fill="rgb(12,12,195)" stroke="#000" stroke-width="1.35"/>
<ellipse cx="1409.2" cy="537.5" rx="4.5" ry="5.4" fill="rgb(157,183,183)" stroke="#000" stroke-width="1.35"/>
<ellipse cx="1389" cy="537.5" rx="4.5" ry="5.4" fill="rgb(131,183,183)" stroke="#000" stroke-width="1.35"/>
<ellipse cx="1370.3" cy="537.5" rx="4.5" ry="5.4" fill="rgb(102,183,183)" stroke="#000" stroke-width="1.35"/>
<ellipse cx="1351" cy="539.1" rx="4.5" ry="5.4" fill="rgb(67,183,183)" stroke="#000" stroke-width="1.35"/>
<ellipse cx="1337.2" cy="539.1" rx="4.5" ry="5.4" fill="rgb(12,183,183)" stroke="#000" stroke-width="1.35"/>
<ellipse cx="1428.1" cy="533.8" rx="4.5" ry="5.4" fill="#fff" stroke="#000" stroke-width="1.35"/>
<svg x="1649" y="147.5" width="250" height="236" overflow="hidden">
<rect x="-2.85" y="105.65" width="16.3" height="16.3" fill="none" stroke="#fff" stroke-width="1.65"/>
<rect x="114.85" y="109.55" width="16.3" height="16.3" fill="none" stroke="#fff" stroke-width="1.65"/>
<rect x="230.55" y="112.75" width="16.3" height="16.3" fill="none" stroke="#000" stroke-width="2"/>
</svg>
<ellipse cx="1718.8" cy="359.5" rx="4.5" ry="5.4" fill="#a3bcbc" stroke="#000" stroke-width="1.35"/>
<ellipse cx="1824" cy="340.6" rx="4.5" ry="5.4" fill="#fff" stroke="#000" stroke-width="1.35"/>
<text transform="translate(17.60,893.10) scale(0.9005,1)" font-size="38.08" fill="#f0f0f0" stroke="#f0f0f0" stroke-width="0.4">Current Reading</text>
<text transform="translate(17.60,948.20) scale(0.8463,1)" font-size="33.72" fill="#f0f0f0" stroke="#f0f0f0" stroke-width="0.35">x: 0,2791</text>
<text transform="translate(17.60,1000.70) scale(0.8535,1)" font-size="33.72" fill="#f0f0f0" stroke="#f0f0f0" stroke-width="0.35">y: 0,3096</text>
<text transform="translate(17.60,1053.20) scale(0.8458,1)" font-size="33.72" fill="#f0f0f0" stroke="#f0f0f0" stroke-width="0.35">fL: 60,78</text>
<text transform="translate(17.60,1105.70) scale(0.8876,1)" font-size="33.72" fill="#f0f0f0" stroke="#f0f0f0" stroke-width="0.35">cd/m²: 208,26</text>
<rect x="407.6" y="867.6" width="291.7" height="231.7" fill="#232323"/>
<line x1="401.6" y1="1098.9" x2="407.6" y2="1098.9" stroke="#ddd" stroke-width="1.5"/>
<text transform="translate(378.51,1106.50) scale(0.7968,1)" font-size="19.19" fill="#e2e2e2" stroke="#e2e2e2" stroke-width="0.3">-20</text>
<line x1="407.6" y1="1041.8" x2="699.3" y2="1041.8" stroke="#8c8c8c" stroke-width="1.8"/>
<line x1="401.6" y1="1041.8" x2="407.6" y2="1041.8" stroke="#ddd" stroke-width="1.5"/>
<text transform="translate(378.51,1049.40) scale(0.7968,1)" font-size="19.19" fill="#e2e2e2" stroke="#e2e2e2" stroke-width="0.3">-10</text>
<line x1="407.6" y1="984.3" x2="699.3" y2="984.3" stroke="#8c8c8c" stroke-width="1.8"/>
<line x1="401.6" y1="984.3" x2="407.6" y2="984.3" stroke="#ddd" stroke-width="1.5"/>
<text transform="translate(392.10,991.90) scale(0.7968,1)" font-size="19.19" fill="#e2e2e2" stroke="#e2e2e2" stroke-width="0.3">0</text>
<line x1="407.6" y1="926.2" x2="699.3" y2="926.2" stroke="#8c8c8c" stroke-width="1.8"/>
<line x1="401.6" y1="926.2" x2="407.6" y2="926.2" stroke="#ddd" stroke-width="1.5"/>
<text transform="translate(383.60,933.80) scale(0.7968,1)" font-size="19.19" fill="#e2e2e2" stroke="#e2e2e2" stroke-width="0.3">10</text>
<line x1="401.6" y1="867.4" x2="407.6" y2="867.4" stroke="#ddd" stroke-width="1.5"/>
<text transform="translate(383.60,875.00) scale(0.7968,1)" font-size="19.19" fill="#e2e2e2" stroke="#e2e2e2" stroke-width="0.3">20</text>
<line x1="407.6" y1="867.6" x2="699.3" y2="867.6" stroke="#a8a8a8" stroke-width="1.8"/>
<line x1="699.3" y1="867.6" x2="699.3" y2="1099.3" stroke="#a8a8a8" stroke-width="1.8"/>
<line x1="407.6" y1="866.9" x2="407.6" y2="1107.3" stroke="#a8a8a8" stroke-width="1.8"/>
<line x1="407.6" y1="1099.3" x2="699.3" y2="1099.3" stroke="#a8a8a8" stroke-width="1.8"/>
<line x1="699.3" y1="1099.3" x2="699.3" y2="1107.3" stroke="#a8a8a8" stroke-width="1.8"/>
<rect x="435.8" y="983.8" width="79.6" height="4.6" fill="#000"/>
<rect x="437.3" y="985.1" width="76.6" height="2" fill="#e01010"/>
<rect x="514.4" y="983.3" width="79" height="2.2" fill="#111"/>
<rect x="592.5" y="893.7" width="79.7" height="91.6" fill="#000"/>
<rect x="594" y="895.2" width="76.7" height="88.6" fill="url(#v4)"/>
<text transform="translate(490.00,860.00) scale(0.7898,1)" font-size="19.77" fill="#e2e2e2" stroke="#e2e2e2" stroke-width="0.3">RGB Balance</text>
<text transform="translate(538.15,1120.00) scale(0.7968,1)" font-size="19.19" fill="#e2e2e2" stroke="#e2e2e2" stroke-width="0.3">20%</text>
<text transform="translate(937.90,865.00) scale(1.1246,1)" font-size="20.96" fill="#f4f4f4">20%</text>
<text transform="translate(1062.40,865.00) scale(1.1246,1)" font-size="20.96" fill="#f4f4f4">40%</text>
<text transform="translate(1186.90,865.00) scale(1.1246,1)" font-size="20.96" fill="#f4f4f4">60%</text>
<text transform="translate(1311.40,865.00) scale(1.1246,1)" font-size="20.96" fill="#f4f4f4">80%</text>
<text transform="translate(1435.90,865.00) scale(1.1246,1)" font-size="20.96" fill="#f4f4f4">100%</text>
<text transform="translate(753.40,903.70) scale(1.0813,1)" font-size="23.55" fill="#f2f2f2">x: CIE31</text>
<text transform="translate(937.50,903.70) scale(1.0813,1)" font-size="23.55" fill="#f2f2f2">0,2791</text>
<text transform="translate(1062.00,903.70) scale(1.0813,1)" font-size="23.55" fill="#f2f2f2">0,2575</text>
<text transform="translate(1186.50,903.70) scale(1.0813,1)" font-size="23.55" fill="#f2f2f2">0,2358</text>
<text transform="translate(1311.00,903.70) scale(1.0813,1)" font-size="23.55" fill="#f2f2f2">0,2139</text>
<text transform="translate(1435.50,903.70) scale(1.0813,1)" font-size="23.55" fill="#f2f2f2">0,1982</text>
<text transform="translate(753.40,940.10) scale(1.0813,1)" font-size="23.55" fill="#e9e9e9">y: CIE31</text>
<text transform="translate(937.50,940.10) scale(1.0813,1)" font-size="23.55" fill="#e9e9e9">0,3096</text>
<text transform="translate(1062.00,940.10) scale(1.0813,1)" font-size="23.55" fill="#e9e9e9">0,3090</text>
<text transform="translate(1186.50,940.10) scale(1.0813,1)" font-size="23.55" fill="#e9e9e9">0,3085</text>
<text transform="translate(1311.00,940.10) scale(1.0813,1)" font-size="23.55" fill="#e9e9e9">0,3080</text>
<text transform="translate(1435.50,940.10) scale(1.0813,1)" font-size="23.55" fill="#e9e9e9">0,3078</text>
<text transform="translate(753.40,976.50) scale(1.0813,1)" font-size="23.55" fill="#f2f2f2">Y</text>
<text transform="translate(937.50,976.50) scale(1.0813,1)" font-size="23.55" fill="#f2f2f2">208,2601</text>
<text transform="translate(1062.00,976.50) scale(1.0813,1)" font-size="23.55" fill="#f2f2f2">197,0040</text>
<text transform="translate(1186.50,976.50) scale(1.0813,1)" font-size="23.55" fill="#f2f2f2">186,7313</text>
<text transform="translate(1311.00,976.50) scale(1.0813,1)" font-size="23.55" fill="#f2f2f2">177,3431</text>
<text transform="translate(1435.50,976.50) scale(1.0813,1)" font-size="23.55" fill="#f2f2f2">170,6378</text>
<text transform="translate(753.40,1012.90) scale(1.0813,1)" font-size="23.55" fill="#e9e9e9">Target x:CIE31</text>
<text transform="translate(937.50,1012.90) scale(1.0813,1)" font-size="23.55" fill="#e9e9e9">0,2899</text>
<text transform="translate(1062.00,1012.90) scale(1.0813,1)" font-size="23.55" fill="#e9e9e9">0,2667</text>
<text transform="translate(1186.50,1012.90) scale(1.0813,1)" font-size="23.55" fill="#e9e9e9">0,2453</text>
<text transform="translate(1311.00,1012.90) scale(1.0813,1)" font-size="23.55" fill="#e9e9e9">0,2235</text>
<text transform="translate(1435.50,1012.90) scale(1.0813,1)" font-size="23.55" fill="#e9e9e9">0,1996</text>
<text transform="translate(753.40,1049.30) scale(1.0813,1)" font-size="23.55" fill="#f2f2f2">Target y:CIE31</text>
<text transform="translate(937.50,1049.30) scale(1.0813,1)" font-size="23.55" fill="#f2f2f2">0,3296</text>
<text transform="translate(1062.00,1049.30) scale(1.0813,1)" font-size="23.55" fill="#f2f2f2">0,3301</text>
<text transform="translate(1186.50,1049.30) scale(1.0813,1)" font-size="23.55" fill="#f2f2f2">0,3307</text>
<text transform="translate(1311.00,1049.30) scale(1.0813,1)" font-size="23.55" fill="#f2f2f2">0,3312</text>
<text transform="translate(1435.50,1049.30) scale(1.0813,1)" font-size="23.55" fill="#f2f2f2">0,3318</text>
<text transform="translate(753.40,1085.70) scale(1.0813,1)" font-size="23.55" fill="#e9e9e9">Target Y</text>
<text transform="translate(937.50,1085.70) scale(1.0813,1)" font-size="23.55" fill="#e9e9e9">205,5442</text>
<text transform="translate(1062.00,1085.70) scale(1.0813,1)" font-size="23.55" fill="#e9e9e9">194,3468</text>
<text transform="translate(1186.50,1085.70) scale(1.0813,1)" font-size="23.55" fill="#e9e9e9">185,0754</text>
<text transform="translate(1311.00,1085.70) scale(1.0813,1)" font-size="23.55" fill="#e9e9e9">176,5277</text>
<text transform="translate(1435.50,1085.70) scale(1.0813,1)" font-size="23.55" fill="#e9e9e9">168,0354</text>
<path d="M16.8 1141.3h7.4l-3.7-3.6z" fill="#222"/>
<text transform="translate(99.55,1179.60) scale(0.9551,1)" font-size="9.16" fill="#bdbdbd" font-weight="bold">20%</text>
<text transform="translate(228.60,1179.60) scale(0.9551,1)" font-size="9.16" fill="#a9a9a9" font-weight="bold">40%</text>
<text transform="translate(357.65,1179.60) scale(0.9551,1)" font-size="9.16" fill="#a9a9a9" font-weight="bold">60%</text>
<text transform="translate(486.70,1179.60) scale(0.9551,1)" font-size="9.16" fill="#a9a9a9" font-weight="bold">80%</text>
<text transform="translate(613.31,1179.60) scale(0.9551,1)" font-size="9.16" fill="#a9a9a9" font-weight="bold">100%</text>
<path d="M1662.2 1141.5h7.6l-3.8-3.8z" fill="#222"/>
<rect x="1703" y="1141.6" width="6.8" height="6.8" fill="#2a2a2a"/>
<path d="M1742.05 1141v8.2l7-4.1z" fill="#2a2a2a"/>
<path d="M1780.5 1141h-2.4v8.4h2.4M1785.7 1141h2.4v8.4h-2.4" fill="none" stroke="#2a2a2a" stroke-width="1.5"/>
<circle cx="1781.9" cy="1145.2" r="0.8" fill="#2a2a2a"/><circle cx="1784.3" cy="1145.2" r="0.8" fill="#2a2a2a"/>
<text transform="translate(1815.80,1149.60) scale(1.0000,1)" font-size="15.00" fill="#2a2a2a" font-weight="bold">∞</text>
<path d="M1854.75 1143.2a4.6 4.6 0 0 1 8.2-1.4M1863.55 1147.2a4.6 4.6 0 0 1-8.2 1.4" fill="none" stroke="#2a2a2a" stroke-width="1.9"/>
<path d="M1864.05 1139.2v4h-4zM1854.25 1151.2v-4h4z" fill="#2a2a2a"/>
<text transform="translate(1709.65,1175.50) scale(1.0000,1)" font-size="13.50" fill="#2c2c2c" font-weight="bold">«</text>
<text transform="translate(1890.25,1175.50) scale(1.0000,1)" font-size="13.50" fill="#2c2c2c" font-weight="bold">»</text>
<text transform="translate(1735.90,1177.80) scale(1.0032,1)" font-size="19.04" fill="#303030" stroke="#303030" stroke-width="0.5">Back</text>
<text transform="translate(1826.30,1177.80) scale(1.1112,1)" font-size="19.04" fill="#303030" stroke="#303030" stroke-width="0.5">Next</text>
</svg>

</body></html>
